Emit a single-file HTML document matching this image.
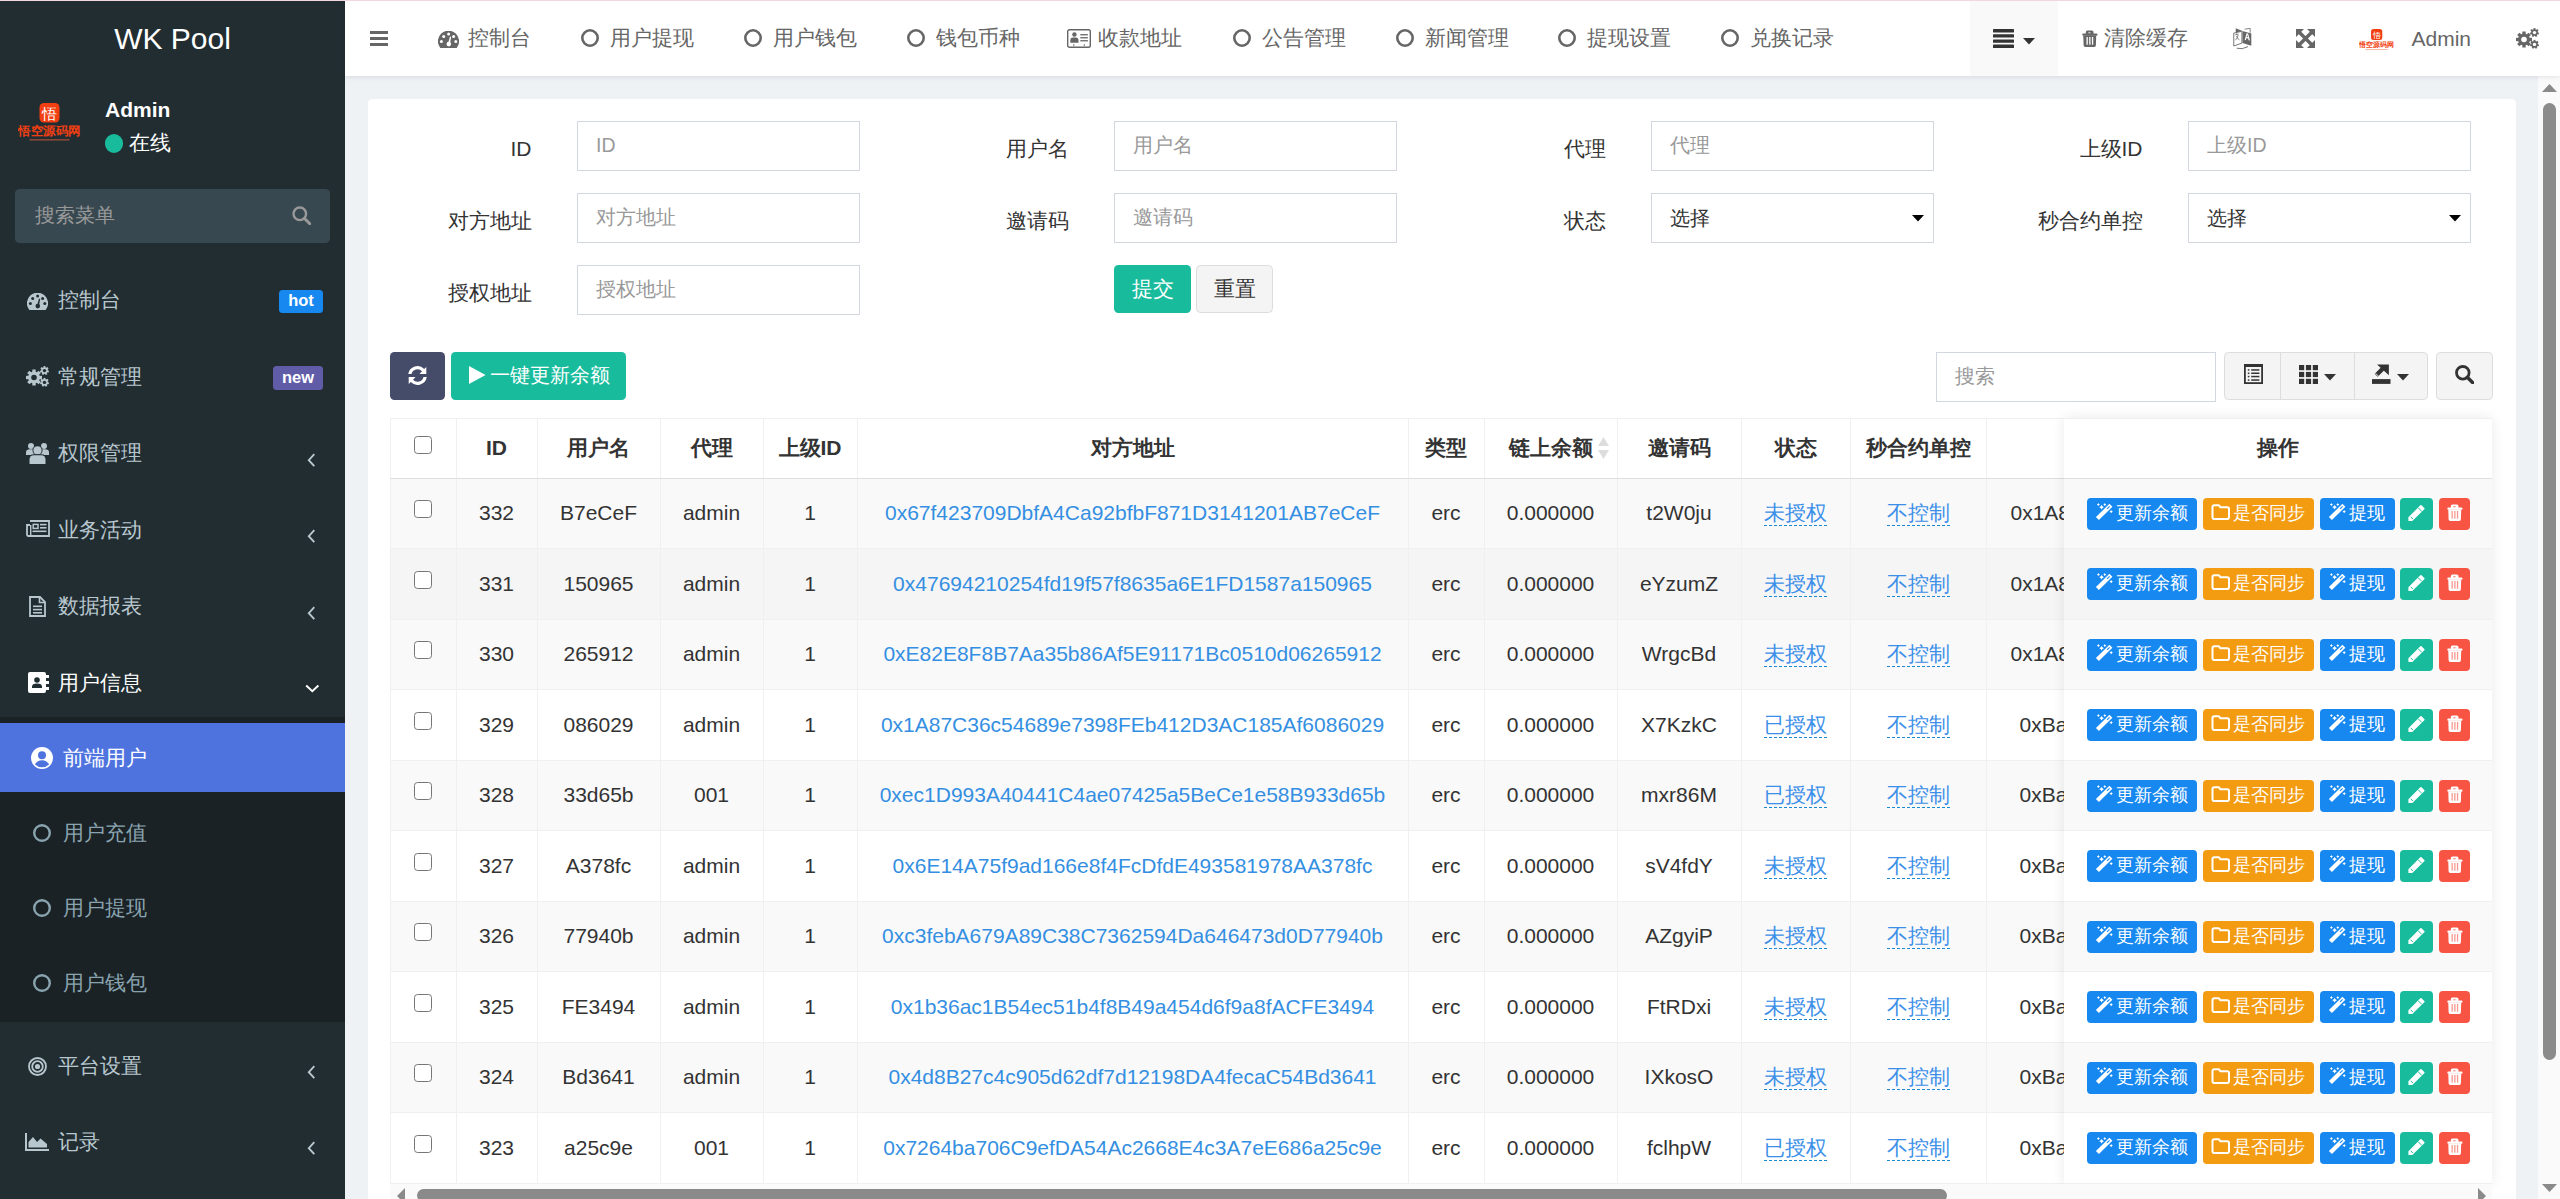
<!DOCTYPE html><html><head><meta charset="utf-8"><style>
html,body{margin:0;padding:0;width:2560px;height:1199px;overflow:hidden;background:#eef2f5;font-family:"Liberation Sans",sans-serif;}
*{box-sizing:border-box;}
</style></head><body>
<div style="position:absolute;left:0px;top:0px;width:345px;height:1199px;background:#222d32;"></div>
<div style="position:absolute;left:-327.5px;top:18.5px;height:40px;line-height:40px;font-size:30px;color:#fff;font-weight:normal;white-space:nowrap;text-align:center;width:1000px;">WK Pool</div>
<svg style="position:absolute;left:17.5px;top:103px;" width="64.0" height="46.0" viewBox="0 0 64.0 46.0"><rect x="21.5" y="0" width="20.0" height="19.5" rx="4.5" fill="#f23f12"/><text x="31.5" y="15.5" font-size="14.5" fill="#fff" text-anchor="middle">悟</text><text x="31.5" y="32.3" font-size="12.0" fill="#f23f12" text-anchor="middle" font-weight="bold" textLength="62.5" lengthAdjust="spacingAndGlyphs">悟空源码网</text><rect x="11.5" y="36.0" width="40.0" height="1.6" fill="#e8603c" opacity="0.5"/></svg>
<div style="position:absolute;left:105px;top:94.5px;height:30px;line-height:30px;font-size:21px;color:#fff;font-weight:bold;white-space:nowrap;text-align:left;">Admin</div>
<div style="position:absolute;left:104.8px;top:134.4px;width:18.3px;height:18.3px;border-radius:50%;background:#18bc9c"></div>
<div style="position:absolute;left:128.8px;top:128.3px;height:30px;line-height:30px;font-size:21px;color:#fff;font-weight:normal;white-space:nowrap;text-align:left;">在线</div>
<div style="position:absolute;left:15px;top:189px;width:315px;height:53.5px;background:#374850;border-radius:4.5px;"></div>
<div style="position:absolute;left:34.8px;top:200.2px;height:30px;line-height:30px;font-size:19.5px;color:#999;font-weight:normal;white-space:nowrap;text-align:left;">搜索菜单</div>
<svg style="position:absolute;left:292px;top:206px;" width="19" height="19" viewBox="0 0 19 19"><circle cx="7.8" cy="7.8" r="6.3" fill="none" stroke="#999" stroke-width="2.4"/><path d="M12.3,12.3 L17.8,17.8" stroke="#999" stroke-width="3.0" stroke-linecap="round"/></svg>
<div style="position:absolute;left:58.2px;top:285.1px;height:30px;line-height:30px;font-size:21px;color:#b8c7ce;font-weight:normal;white-space:nowrap;text-align:left;">控制台</div>
<svg style="position:absolute;left:26.7px;top:292.70000000000005px;" width="21" height="17" viewBox="0 0 21 17"><path d="M2.3,17 A10.6,10.6 0 1 1 18.7,17 Z" fill="#b8c7ce"/><circle cx="3.4" cy="10.6" r="1.5" fill="#222d32"/><circle cx="5.7" cy="5.4" r="1.5" fill="#222d32"/><circle cx="10.6" cy="3.1" r="1.5" fill="#222d32"/><circle cx="15.6" cy="5.4" r="1.5" fill="#222d32"/><circle cx="17.8" cy="10.6" r="1.5" fill="#222d32"/><circle cx="10.8" cy="13.1" r="2.3" fill="#222d32"/><path d="M9.9,12.9 L12,5.6 L13.2,5.9 L11.8,13.3 Z" fill="#222d32"/></svg>
<div style="position:absolute;left:279px;top:289.6px;width:44px;height:23px;border-radius:3.5px;background:#1688f0;color:#fff;font-weight:bold;font-size:16.5px;line-height:21.5px;text-align:center">hot</div>
<div style="position:absolute;left:58.2px;top:361.6px;height:30px;line-height:30px;font-size:21px;color:#b8c7ce;font-weight:normal;white-space:nowrap;text-align:left;">常规管理</div>
<svg style="position:absolute;left:26.3px;top:366.1px;" width="23" height="21" viewBox="0 0 23 21"><circle cx="8" cy="11.5" r="5.92" fill="#b8c7ce"/><rect x="6.32" y="3.50" width="3.36" height="4.00" fill="#b8c7ce" transform="rotate(0.0 8 11.5)"/><rect x="6.32" y="3.50" width="3.36" height="4.00" fill="#b8c7ce" transform="rotate(45.0 8 11.5)"/><rect x="6.32" y="3.50" width="3.36" height="4.00" fill="#b8c7ce" transform="rotate(90.0 8 11.5)"/><rect x="6.32" y="3.50" width="3.36" height="4.00" fill="#b8c7ce" transform="rotate(135.0 8 11.5)"/><rect x="6.32" y="3.50" width="3.36" height="4.00" fill="#b8c7ce" transform="rotate(180.0 8 11.5)"/><rect x="6.32" y="3.50" width="3.36" height="4.00" fill="#b8c7ce" transform="rotate(225.0 8 11.5)"/><rect x="6.32" y="3.50" width="3.36" height="4.00" fill="#b8c7ce" transform="rotate(270.0 8 11.5)"/><rect x="6.32" y="3.50" width="3.36" height="4.00" fill="#b8c7ce" transform="rotate(315.0 8 11.5)"/><circle cx="8" cy="11.5" r="2.8" fill="#222d32"/><circle cx="18.5" cy="4.6" r="3.33" fill="#b8c7ce"/><rect x="17.55" y="0.10" width="1.89" height="2.25" fill="#b8c7ce" transform="rotate(0.0 18.5 4.6)"/><rect x="17.55" y="0.10" width="1.89" height="2.25" fill="#b8c7ce" transform="rotate(51.4 18.5 4.6)"/><rect x="17.55" y="0.10" width="1.89" height="2.25" fill="#b8c7ce" transform="rotate(102.9 18.5 4.6)"/><rect x="17.55" y="0.10" width="1.89" height="2.25" fill="#b8c7ce" transform="rotate(154.3 18.5 4.6)"/><rect x="17.55" y="0.10" width="1.89" height="2.25" fill="#b8c7ce" transform="rotate(205.7 18.5 4.6)"/><rect x="17.55" y="0.10" width="1.89" height="2.25" fill="#b8c7ce" transform="rotate(257.1 18.5 4.6)"/><rect x="17.55" y="0.10" width="1.89" height="2.25" fill="#b8c7ce" transform="rotate(308.6 18.5 4.6)"/><circle cx="18.5" cy="4.6" r="1.7" fill="#222d32"/><circle cx="18.5" cy="16.4" r="3.33" fill="#b8c7ce"/><rect x="17.55" y="11.90" width="1.89" height="2.25" fill="#b8c7ce" transform="rotate(0.0 18.5 16.4)"/><rect x="17.55" y="11.90" width="1.89" height="2.25" fill="#b8c7ce" transform="rotate(51.4 18.5 16.4)"/><rect x="17.55" y="11.90" width="1.89" height="2.25" fill="#b8c7ce" transform="rotate(102.9 18.5 16.4)"/><rect x="17.55" y="11.90" width="1.89" height="2.25" fill="#b8c7ce" transform="rotate(154.3 18.5 16.4)"/><rect x="17.55" y="11.90" width="1.89" height="2.25" fill="#b8c7ce" transform="rotate(205.7 18.5 16.4)"/><rect x="17.55" y="11.90" width="1.89" height="2.25" fill="#b8c7ce" transform="rotate(257.1 18.5 16.4)"/><rect x="17.55" y="11.90" width="1.89" height="2.25" fill="#b8c7ce" transform="rotate(308.6 18.5 16.4)"/><circle cx="18.5" cy="16.4" r="1.7" fill="#222d32"/></svg>
<div style="position:absolute;left:273px;top:365.6px;width:50px;height:24.5px;border-radius:3.5px;background:#605ca8;color:#fff;font-weight:bold;font-size:16.5px;line-height:23.5px;text-align:center">new</div>
<div style="position:absolute;left:58.2px;top:438.1px;height:30px;line-height:30px;font-size:21px;color:#b8c7ce;font-weight:normal;white-space:nowrap;text-align:left;">权限管理</div>
<svg style="position:absolute;left:26px;top:443.1px;" width="23" height="21" viewBox="0 0 23 21"><circle cx="5" cy="3.1" r="3" fill="#b8c7ce"/><circle cx="18" cy="3.1" r="3" fill="#b8c7ce"/><path d="M0,12 L0,9.5 Q0,6.3 4,6.3 L7,6.3 Q9.5,6.3 9.5,9.5 L9.5,12 Z" fill="#b8c7ce"/><path d="M13.5,12 L13.5,9.5 Q13.5,6.3 16,6.3 L19,6.3 Q23,6.3 23,9.5 L23,12 Z" fill="#b8c7ce"/><circle cx="11.5" cy="7.4" r="5" fill="#222d32"/><circle cx="11.5" cy="7.4" r="4.1" fill="#b8c7ce"/><path d="M2.5,21 L2.5,16.5 Q2.5,11.2 8,11.2 L15,11.2 Q20.5,11.2 20.5,16.5 L20.5,21 Z" fill="#222d32"/><path d="M3.5,20.8 L3.5,16.5 Q3.5,12.2 8,12.2 L15,12.2 Q19.5,12.2 19.5,16.5 L19.5,20.8 Q19.5,21 19,21 L4,21 Q3.5,21 3.5,20.8 Z" fill="#b8c7ce"/></svg>
<svg style="position:absolute;left:306.8px;top:452.6px;" width="9" height="15" viewBox="0 0 9 15"><path d="M7.3,1.2 L1.8,7.2 L7.3,13.2" fill="none" stroke="#b8c7ce" stroke-width="1.9"/></svg>
<div style="position:absolute;left:58.2px;top:514.6px;height:30px;line-height:30px;font-size:21px;color:#b8c7ce;font-weight:normal;white-space:nowrap;text-align:left;">业务活动</div>
<svg style="position:absolute;left:25.5px;top:520.3000000000001px;" width="24" height="17" viewBox="0 0 24 17"><path d="M4,1 L23,1 L23,16 L2.5,16 Q1,16 1,14.5 L1,5 L4,5" fill="none" stroke="#b8c7ce" stroke-width="1.8"/><rect x="7.2" y="4.4" width="4.8" height="4" fill="none" stroke="#b8c7ce" stroke-width="1.5"/><rect x="14" y="3.8" width="6.5" height="1.6" fill="#b8c7ce"/><rect x="14" y="7" width="6.5" height="1.6" fill="#b8c7ce"/><rect x="6.5" y="10.5" width="14" height="1.6" fill="#b8c7ce"/><rect x="6.5" y="13" width="14" height="0" fill="#b8c7ce"/><rect x="4" y="5" width="1.4" height="10" fill="#b8c7ce"/></svg>
<svg style="position:absolute;left:306.8px;top:529.1px;" width="9" height="15" viewBox="0 0 9 15"><path d="M7.3,1.2 L1.8,7.2 L7.3,13.2" fill="none" stroke="#b8c7ce" stroke-width="1.9"/></svg>
<div style="position:absolute;left:58.2px;top:591.1px;height:30px;line-height:30px;font-size:21px;color:#b8c7ce;font-weight:normal;white-space:nowrap;text-align:left;">数据报表</div>
<svg style="position:absolute;left:29px;top:595.6px;" width="17" height="21" viewBox="0 0 17 21"><path d="M1,1 L11,1 L16,6 L16,20 L1,20 Z" fill="none" stroke="#b8c7ce" stroke-width="1.8"/><path d="M10.5,1 L10.5,6.5 L16,6.5" fill="none" stroke="#b8c7ce" stroke-width="1.6"/><rect x="4" y="9.5" width="9" height="1.6" fill="#b8c7ce"/><rect x="4" y="12.8" width="9" height="1.6" fill="#b8c7ce"/><rect x="4" y="16" width="9" height="1.6" fill="#b8c7ce"/></svg>
<svg style="position:absolute;left:306.8px;top:605.6px;" width="9" height="15" viewBox="0 0 9 15"><path d="M7.3,1.2 L1.8,7.2 L7.3,13.2" fill="none" stroke="#b8c7ce" stroke-width="1.9"/></svg>
<div style="position:absolute;left:58.2px;top:667.6px;height:30px;line-height:30px;font-size:21px;color:#fff;font-weight:normal;white-space:nowrap;text-align:left;">用户信息</div>
<svg style="position:absolute;left:27.5px;top:672.1px;" width="21" height="21" viewBox="0 0 21 21"><rect x="0" y="0" width="18" height="21" rx="2" fill="#fff"/><rect x="18" y="3" width="3" height="3" fill="#fff"/><rect x="18" y="9" width="3" height="3" fill="#fff"/><rect x="18" y="15" width="3" height="3" fill="#fff"/><circle cx="9" cy="8" r="2.8" fill="#222d32"/><path d="M4,16 L4,14.5 Q4,11.5 9,11.5 Q14,11.5 14,14.5 L14,16 Z" fill="#222d32"/></svg>
<svg style="position:absolute;left:305px;top:683.8000000000001px;" width="15" height="9" viewBox="0 0 15 9"><path d="M1.2,1.5 L7.3,7.3 L13.4,1.5" fill="none" stroke="#fff" stroke-width="1.9"/></svg>
<div style="position:absolute;left:0px;top:716.6px;width:345px;height:305.9px;background:#1a2226;"></div>
<div style="position:absolute;left:0px;top:723px;width:345px;height:69px;background:#4e73df;"></div>
<svg style="position:absolute;left:31.2px;top:746.8px;" width="22" height="22" viewBox="0 0 22 22"><circle cx="11" cy="11" r="11" fill="#fff"/><circle cx="11" cy="8.3" r="4" fill="#4e73df"/><path d="M4,17.5 Q6,13.2 11,13.2 Q16,13.2 18,17.5 Q15,20.3 11,20.3 Q7,20.3 4,17.5 Z" fill="#4e73df"/></svg>
<div style="position:absolute;left:63px;top:742.5px;height:30px;line-height:30px;font-size:21px;color:#fff;font-weight:normal;white-space:nowrap;text-align:left;">前端用户</div>
<svg style="position:absolute;left:33px;top:824px;" width="18" height="18" viewBox="0 0 18 18"><circle cx="9" cy="9" r="7.8" fill="none" stroke="#8aa4af" stroke-width="2.4"/></svg>
<div style="position:absolute;left:63px;top:818.0px;height:30px;line-height:30px;font-size:21px;color:#8aa4af;font-weight:normal;white-space:nowrap;text-align:left;">用户充值</div>
<svg style="position:absolute;left:33px;top:899px;" width="18" height="18" viewBox="0 0 18 18"><circle cx="9" cy="9" r="7.8" fill="none" stroke="#8aa4af" stroke-width="2.4"/></svg>
<div style="position:absolute;left:63px;top:893.0px;height:30px;line-height:30px;font-size:21px;color:#8aa4af;font-weight:normal;white-space:nowrap;text-align:left;">用户提现</div>
<svg style="position:absolute;left:33px;top:974px;" width="18" height="18" viewBox="0 0 18 18"><circle cx="9" cy="9" r="7.8" fill="none" stroke="#8aa4af" stroke-width="2.4"/></svg>
<div style="position:absolute;left:63px;top:968.0px;height:30px;line-height:30px;font-size:21px;color:#8aa4af;font-weight:normal;white-space:nowrap;text-align:left;">用户钱包</div>
<div style="position:absolute;left:58.3px;top:1050.8px;height:30px;line-height:30px;font-size:21px;color:#b8c7ce;font-weight:normal;white-space:nowrap;text-align:left;">平台设置</div>
<svg style="position:absolute;left:28.3px;top:1056.5px;" width="19" height="19" viewBox="0 0 19 19"><circle cx="9.5" cy="9.5" r="8.5" fill="none" stroke="#b8c7ce" stroke-width="1.8"/><circle cx="9.5" cy="9.5" r="5.3" fill="none" stroke="#b8c7ce" stroke-width="1.8"/><circle cx="9.5" cy="9.5" r="2.6" fill="#b8c7ce"/></svg>
<svg style="position:absolute;left:306.8px;top:1065.3px;" width="9" height="15" viewBox="0 0 9 15"><path d="M7.3,1.2 L1.8,7.2 L7.3,13.2" fill="none" stroke="#b8c7ce" stroke-width="1.9"/></svg>
<div style="position:absolute;left:58.3px;top:1126.7px;height:30px;line-height:30px;font-size:21px;color:#b8c7ce;font-weight:normal;white-space:nowrap;text-align:left;">记录</div>
<svg style="position:absolute;left:25px;top:1132.7px;" width="24" height="18" viewBox="0 0 24 18"><path d="M0,0 L2,0 L2,16 L24,16 L24,18 L0,18 Z" fill="#b8c7ce"/><path d="M3.5,14.5 L3.5,9 L8,4 L12,9 L15.5,5.5 L22,11 L22,14.5 Z" fill="#b8c7ce"/></svg>
<svg style="position:absolute;left:306.8px;top:1141.2px;" width="9" height="15" viewBox="0 0 9 15"><path d="M7.3,1.2 L1.8,7.2 L7.3,13.2" fill="none" stroke="#b8c7ce" stroke-width="1.9"/></svg>
<div style="position:absolute;left:345px;top:0px;width:2215px;height:76px;background:#fff;box-shadow:0 1px 5px rgba(0,20,50,0.10);z-index:2;"></div>
<div style="position:absolute;left:0;top:0;width:2560px;height:76px;z-index:3;pointer-events:none">
<svg style="position:absolute;left:370px;top:31px;" width="18" height="15" viewBox="0 0 18 15"><rect x="0" y="0" width="18" height="3" fill="#666"/><rect x="0" y="6" width="18" height="3" fill="#666"/><rect x="0" y="12" width="18" height="3" fill="#666"/></svg>
<svg style="position:absolute;left:438px;top:31px;" width="21" height="17" viewBox="0 0 21 17"><path d="M2.3,17 A10.6,10.6 0 1 1 18.7,17 Z" fill="#666"/><circle cx="3.4" cy="10.6" r="1.5" fill="#fff"/><circle cx="5.7" cy="5.4" r="1.5" fill="#fff"/><circle cx="10.6" cy="3.1" r="1.5" fill="#fff"/><circle cx="15.6" cy="5.4" r="1.5" fill="#fff"/><circle cx="17.8" cy="10.6" r="1.5" fill="#fff"/><circle cx="10.8" cy="13.1" r="2.3" fill="#fff"/><path d="M9.9,12.9 L12,5.6 L13.2,5.9 L11.8,13.3 Z" fill="#fff"/></svg>
<div style="position:absolute;left:467.5px;top:23.0px;height:30px;line-height:30px;font-size:21px;color:#666;font-weight:normal;white-space:nowrap;text-align:left;">控制台</div>
<svg style="position:absolute;left:581px;top:29.3px;" width="18" height="18" viewBox="0 0 18 18"><circle cx="9" cy="9" r="7.7" fill="none" stroke="#666" stroke-width="2.6"/></svg>
<div style="position:absolute;left:610px;top:23.0px;height:30px;line-height:30px;font-size:21px;color:#666;font-weight:normal;white-space:nowrap;text-align:left;">用户提现</div>
<svg style="position:absolute;left:744px;top:29.3px;" width="18" height="18" viewBox="0 0 18 18"><circle cx="9" cy="9" r="7.7" fill="none" stroke="#666" stroke-width="2.6"/></svg>
<div style="position:absolute;left:773px;top:23.0px;height:30px;line-height:30px;font-size:21px;color:#666;font-weight:normal;white-space:nowrap;text-align:left;">用户钱包</div>
<svg style="position:absolute;left:907px;top:29.3px;" width="18" height="18" viewBox="0 0 18 18"><circle cx="9" cy="9" r="7.7" fill="none" stroke="#666" stroke-width="2.6"/></svg>
<div style="position:absolute;left:936px;top:23.0px;height:30px;line-height:30px;font-size:21px;color:#666;font-weight:normal;white-space:nowrap;text-align:left;">钱包币种</div>
<svg style="position:absolute;left:1067px;top:29px;" width="24" height="19" viewBox="0 0 24 19"><rect x="0.7" y="0.7" width="22.6" height="17.5" rx="1.8" fill="none" stroke="#666" stroke-width="1.4"/><circle cx="7.4" cy="5.5" r="2.2" fill="#666"/><path d="M3.3,13.8 L3.3,11.5 Q3.3,8.6 6,8.6 L8.8,8.6 Q11.5,8.6 11.5,11.5 L11.5,13.8 Z" fill="#666"/><rect x="13.3" y="5.1" width="7.6" height="1.3" fill="#666"/><rect x="13.3" y="8.1" width="7.6" height="1.3" fill="#666"/><rect x="13.3" y="11.1" width="7.6" height="1.3" fill="#666"/><rect x="6.4" y="15.1" width="0.9" height="2" fill="#666"/><rect x="16.8" y="15.1" width="0.9" height="2" fill="#666"/></svg>
<div style="position:absolute;left:1098px;top:23.0px;height:30px;line-height:30px;font-size:21px;color:#666;font-weight:normal;white-space:nowrap;text-align:left;">收款地址</div>
<svg style="position:absolute;left:1233px;top:29.3px;" width="18" height="18" viewBox="0 0 18 18"><circle cx="9" cy="9" r="7.7" fill="none" stroke="#666" stroke-width="2.6"/></svg>
<div style="position:absolute;left:1262px;top:23.0px;height:30px;line-height:30px;font-size:21px;color:#666;font-weight:normal;white-space:nowrap;text-align:left;">公告管理</div>
<svg style="position:absolute;left:1396px;top:29.3px;" width="18" height="18" viewBox="0 0 18 18"><circle cx="9" cy="9" r="7.7" fill="none" stroke="#666" stroke-width="2.6"/></svg>
<div style="position:absolute;left:1425px;top:23.0px;height:30px;line-height:30px;font-size:21px;color:#666;font-weight:normal;white-space:nowrap;text-align:left;">新闻管理</div>
<svg style="position:absolute;left:1558px;top:29.3px;" width="18" height="18" viewBox="0 0 18 18"><circle cx="9" cy="9" r="7.7" fill="none" stroke="#666" stroke-width="2.6"/></svg>
<div style="position:absolute;left:1587px;top:23.0px;height:30px;line-height:30px;font-size:21px;color:#666;font-weight:normal;white-space:nowrap;text-align:left;">提现设置</div>
<svg style="position:absolute;left:1721px;top:29.3px;" width="18" height="18" viewBox="0 0 18 18"><circle cx="9" cy="9" r="7.7" fill="none" stroke="#666" stroke-width="2.6"/></svg>
<div style="position:absolute;left:1750px;top:23.0px;height:30px;line-height:30px;font-size:21px;color:#666;font-weight:normal;white-space:nowrap;text-align:left;">兑换记录</div>
<div style="position:absolute;left:1970px;top:1px;width:88px;height:75px;background:#f9f9f9;"></div>
<svg style="position:absolute;left:1993px;top:29px;" width="21" height="19" viewBox="0 0 21 19"><rect x="0" y="0" width="21" height="3.4" rx="0.6" fill="#333"/><rect x="0" y="5.2" width="21" height="3.4" rx="0.6" fill="#333"/><rect x="0" y="10.4" width="21" height="3.4" rx="0.6" fill="#333"/><rect x="0" y="15.6" width="21" height="3.4" rx="0.6" fill="#333"/></svg>
<svg style="position:absolute;left:2023px;top:38px;" width="12" height="7" viewBox="0 0 12 7"><path d="M0,0 L12,0 L6,6.6 Z" fill="#333"/></svg>
<svg style="position:absolute;left:2082px;top:29.5px;" width="16" height="17" viewBox="0 0 16 17"><rect x="3.8" y="0.5" width="7.7" height="4" rx="1.6" fill="#666"/><rect x="6.3" y="2.4" width="2.2" height="1.1" fill="#fff"/><rect x="0.3" y="3.5" width="15.2" height="2.3" rx="1" fill="#666"/><path d="M1.3,5.5 L14.2,5.5 L13.9,15.3 Q13.9,17 12.2,17 L3.3,17 Q1.6,17 1.6,15.3 Z" fill="#666"/><rect x="4.5" y="7" width="1.3" height="7.7" fill="#fff" opacity="1.0"/><rect x="7.2" y="7" width="1.3" height="7.7" fill="#fff" opacity="1.0"/><rect x="9.9" y="7" width="1.3" height="7.7" fill="#fff" opacity="1.0"/></svg>
<div style="position:absolute;left:2104px;top:23.0px;height:30px;line-height:30px;font-size:21px;color:#666;font-weight:normal;white-space:nowrap;text-align:left;">清除缓存</div>
<svg style="position:absolute;left:2232.5px;top:28px;" width="19" height="22" viewBox="0 0 19 22"><path d="M2.75,0.3 L2.75,4.6 L9.5,3.1 Z" fill="#666"/><path d="M11.6,1.2 L17.2,0.4 L17.2,4.8" fill="none" stroke="#666" stroke-width="0.8"/><path d="M9.5,3.1 L18.3,5.6 L18.3,17.8 L9.5,15.1 Z" fill="#666"/><path d="M0.75,5.1 L8.9,3.3 L8.9,15.1 L0.75,18 Z" fill="none" stroke="#666" stroke-width="0.9"/><path d="M11.6,12.3 L13.6,5.2 L15.1,5.6 L17,12.6 L15.6,12.3 L15.1,10.5 L13.3,10.2 L12.9,11.9 Z M13.6,9 L14.9,9.2 L14.3,6.8 Z" fill="#fff" fill-rule="evenodd"/><path d="M2.3,6.8 L5.5,6.2 M3.6,5.4 L3.9,6.5 M2.4,12.2 Q4.8,10 5.2,7 M3.4,8.2 Q4.6,11 6.4,11.8" fill="none" stroke="#666" stroke-width="0.8"/><path d="M3.7,20.2 Q9,22 15,18.6" fill="none" stroke="#666" stroke-width="0.9"/></svg>
<svg style="position:absolute;left:2296px;top:29px;" width="19" height="19" viewBox="0 0 19 19"><path d="M2.5,2.5 L16.5,16.5 M16.5,2.5 L2.5,16.5" stroke="#666" stroke-width="3.4"/><path d="M0,0 L8,0 L0,8 Z M19,0 L19,8 L11,0 Z M0,19 L0,11 L8,19 Z M19,19 L11,19 L19,11 Z" fill="#666"/></svg>
<svg style="position:absolute;left:2359px;top:28.5px;" width="35.84" height="25.76" viewBox="0 0 35.84 25.76"><rect x="12.040000000000001" y="0" width="11.200000000000001" height="10.920000000000002" rx="2.5200000000000005" fill="#f23f12"/><text x="17.64" y="8.680000000000001" font-size="8.120000000000001" fill="#fff" text-anchor="middle">悟</text><text x="17.64" y="18.088" font-size="6.720000000000001" fill="#f23f12" text-anchor="middle" font-weight="bold" textLength="35.0" lengthAdjust="spacingAndGlyphs">悟空源码网</text><rect x="6.44" y="20.160000000000004" width="22.400000000000002" height="0.8960000000000001" fill="#e8603c" opacity="0.5"/></svg>
<div style="position:absolute;left:2411.5px;top:23.5px;height:30px;line-height:30px;font-size:21px;color:#666;font-weight:normal;white-space:nowrap;text-align:left;">Admin</div>
<svg style="position:absolute;left:2516px;top:28px;" width="23" height="21" viewBox="0 0 23 21"><circle cx="8" cy="11.5" r="5.92" fill="#666"/><rect x="6.32" y="3.50" width="3.36" height="4.00" fill="#666" transform="rotate(0.0 8 11.5)"/><rect x="6.32" y="3.50" width="3.36" height="4.00" fill="#666" transform="rotate(45.0 8 11.5)"/><rect x="6.32" y="3.50" width="3.36" height="4.00" fill="#666" transform="rotate(90.0 8 11.5)"/><rect x="6.32" y="3.50" width="3.36" height="4.00" fill="#666" transform="rotate(135.0 8 11.5)"/><rect x="6.32" y="3.50" width="3.36" height="4.00" fill="#666" transform="rotate(180.0 8 11.5)"/><rect x="6.32" y="3.50" width="3.36" height="4.00" fill="#666" transform="rotate(225.0 8 11.5)"/><rect x="6.32" y="3.50" width="3.36" height="4.00" fill="#666" transform="rotate(270.0 8 11.5)"/><rect x="6.32" y="3.50" width="3.36" height="4.00" fill="#666" transform="rotate(315.0 8 11.5)"/><circle cx="8" cy="11.5" r="2.8" fill="#fff"/><circle cx="18.5" cy="4.6" r="3.33" fill="#666"/><rect x="17.55" y="0.10" width="1.89" height="2.25" fill="#666" transform="rotate(0.0 18.5 4.6)"/><rect x="17.55" y="0.10" width="1.89" height="2.25" fill="#666" transform="rotate(51.4 18.5 4.6)"/><rect x="17.55" y="0.10" width="1.89" height="2.25" fill="#666" transform="rotate(102.9 18.5 4.6)"/><rect x="17.55" y="0.10" width="1.89" height="2.25" fill="#666" transform="rotate(154.3 18.5 4.6)"/><rect x="17.55" y="0.10" width="1.89" height="2.25" fill="#666" transform="rotate(205.7 18.5 4.6)"/><rect x="17.55" y="0.10" width="1.89" height="2.25" fill="#666" transform="rotate(257.1 18.5 4.6)"/><rect x="17.55" y="0.10" width="1.89" height="2.25" fill="#666" transform="rotate(308.6 18.5 4.6)"/><circle cx="18.5" cy="4.6" r="1.7" fill="#fff"/><circle cx="18.5" cy="16.4" r="3.33" fill="#666"/><rect x="17.55" y="11.90" width="1.89" height="2.25" fill="#666" transform="rotate(0.0 18.5 16.4)"/><rect x="17.55" y="11.90" width="1.89" height="2.25" fill="#666" transform="rotate(51.4 18.5 16.4)"/><rect x="17.55" y="11.90" width="1.89" height="2.25" fill="#666" transform="rotate(102.9 18.5 16.4)"/><rect x="17.55" y="11.90" width="1.89" height="2.25" fill="#666" transform="rotate(154.3 18.5 16.4)"/><rect x="17.55" y="11.90" width="1.89" height="2.25" fill="#666" transform="rotate(205.7 18.5 16.4)"/><rect x="17.55" y="11.90" width="1.89" height="2.25" fill="#666" transform="rotate(257.1 18.5 16.4)"/><rect x="17.55" y="11.90" width="1.89" height="2.25" fill="#666" transform="rotate(308.6 18.5 16.4)"/><circle cx="18.5" cy="16.4" r="1.7" fill="#fff"/></svg>
</div>
<div style="position:absolute;left:0px;top:0px;width:2560px;height:1px;background:#f0d8de;z-index:5;"></div>
<div style="position:absolute;left:368px;top:99px;width:2148px;height:1150px;background:#fff;border-radius:4.5px;"></div>
<div style="position:absolute;left:-468.5px;top:133.5px;height:30px;line-height:30px;font-size:21px;color:#333;font-weight:normal;white-space:nowrap;text-align:right;width:1000px;">ID</div>
<div style="position:absolute;left:577px;top:121px;width:283px;height:49.5px;border:1px solid #d2d6de;background:#fff"></div>
<div style="position:absolute;left:596px;top:130.0px;height:30px;line-height:30px;font-size:19.5px;color:#999;font-weight:normal;white-space:nowrap;text-align:left;">ID</div>
<div style="position:absolute;left:68.5px;top:133.5px;height:30px;line-height:30px;font-size:21px;color:#333;font-weight:normal;white-space:nowrap;text-align:right;width:1000px;">用户名</div>
<div style="position:absolute;left:1114px;top:121px;width:283px;height:49.5px;border:1px solid #d2d6de;background:#fff"></div>
<div style="position:absolute;left:1133px;top:130.0px;height:30px;line-height:30px;font-size:19.5px;color:#999;font-weight:normal;white-space:nowrap;text-align:left;">用户名</div>
<div style="position:absolute;left:605.5px;top:133.5px;height:30px;line-height:30px;font-size:21px;color:#333;font-weight:normal;white-space:nowrap;text-align:right;width:1000px;">代理</div>
<div style="position:absolute;left:1651px;top:121px;width:283px;height:49.5px;border:1px solid #d2d6de;background:#fff"></div>
<div style="position:absolute;left:1670px;top:130.0px;height:30px;line-height:30px;font-size:19.5px;color:#999;font-weight:normal;white-space:nowrap;text-align:left;">代理</div>
<div style="position:absolute;left:1142.5px;top:133.5px;height:30px;line-height:30px;font-size:21px;color:#333;font-weight:normal;white-space:nowrap;text-align:right;width:1000px;">上级ID</div>
<div style="position:absolute;left:2188px;top:121px;width:283px;height:49.5px;border:1px solid #d2d6de;background:#fff"></div>
<div style="position:absolute;left:2207px;top:130.0px;height:30px;line-height:30px;font-size:19.5px;color:#999;font-weight:normal;white-space:nowrap;text-align:left;">上级ID</div>
<div style="position:absolute;left:-468.5px;top:205.5px;height:30px;line-height:30px;font-size:21px;color:#333;font-weight:normal;white-space:nowrap;text-align:right;width:1000px;">对方地址</div>
<div style="position:absolute;left:577px;top:193px;width:283px;height:49.5px;border:1px solid #d2d6de;background:#fff"></div>
<div style="position:absolute;left:596px;top:202.0px;height:30px;line-height:30px;font-size:19.5px;color:#999;font-weight:normal;white-space:nowrap;text-align:left;">对方地址</div>
<div style="position:absolute;left:68.5px;top:205.5px;height:30px;line-height:30px;font-size:21px;color:#333;font-weight:normal;white-space:nowrap;text-align:right;width:1000px;">邀请码</div>
<div style="position:absolute;left:1114px;top:193px;width:283px;height:49.5px;border:1px solid #d2d6de;background:#fff"></div>
<div style="position:absolute;left:1133px;top:202.0px;height:30px;line-height:30px;font-size:19.5px;color:#999;font-weight:normal;white-space:nowrap;text-align:left;">邀请码</div>
<div style="position:absolute;left:605.5px;top:205.5px;height:30px;line-height:30px;font-size:21px;color:#333;font-weight:normal;white-space:nowrap;text-align:right;width:1000px;">状态</div>
<div style="position:absolute;left:1651px;top:193px;width:283px;height:49.5px;border:1px solid #d2d6de;background:#fff"></div>
<div style="position:absolute;left:1670px;top:202.5px;height:30px;line-height:30px;font-size:19.5px;color:#333;font-weight:normal;white-space:nowrap;text-align:left;">选择</div>
<svg style="position:absolute;left:1912px;top:214.5px;" width="12" height="7" viewBox="0 0 12 7"><path d="M0,0 L12,0 L6,6.6 Z" fill="#000"/></svg>
<div style="position:absolute;left:1142.5px;top:205.5px;height:30px;line-height:30px;font-size:21px;color:#333;font-weight:normal;white-space:nowrap;text-align:right;width:1000px;">秒合约单控</div>
<div style="position:absolute;left:2188px;top:193px;width:283px;height:49.5px;border:1px solid #d2d6de;background:#fff"></div>
<div style="position:absolute;left:2207px;top:202.5px;height:30px;line-height:30px;font-size:19.5px;color:#333;font-weight:normal;white-space:nowrap;text-align:left;">选择</div>
<svg style="position:absolute;left:2449px;top:214.5px;" width="12" height="7" viewBox="0 0 12 7"><path d="M0,0 L12,0 L6,6.6 Z" fill="#000"/></svg>
<div style="position:absolute;left:-468.5px;top:277.5px;height:30px;line-height:30px;font-size:21px;color:#333;font-weight:normal;white-space:nowrap;text-align:right;width:1000px;">授权地址</div>
<div style="position:absolute;left:577px;top:265px;width:283px;height:49.5px;border:1px solid #d2d6de;background:#fff"></div>
<div style="position:absolute;left:596px;top:274.0px;height:30px;line-height:30px;font-size:19.5px;color:#999;font-weight:normal;white-space:nowrap;text-align:left;">授权地址</div>
<div style="position:absolute;left:1114px;top:265px;width:77px;height:48px;border-radius:4.5px;background:#18bc9c"></div>
<div style="position:absolute;left:652.5px;top:274.0px;height:30px;line-height:30px;font-size:21px;color:#fff;font-weight:normal;white-space:nowrap;text-align:center;width:1000px;">提交</div>
<div style="position:absolute;left:1196px;top:265px;width:77px;height:48px;border-radius:4.5px;background:#f4f4f4;border:1px solid #ddd"></div>
<div style="position:absolute;left:734.5px;top:274.0px;height:30px;line-height:30px;font-size:21px;color:#333;font-weight:normal;white-space:nowrap;text-align:center;width:1000px;">重置</div>
<div style="position:absolute;left:390px;top:352px;width:55px;height:48px;border-radius:4.5px;background:#444c69"></div>
<svg style="position:absolute;left:408px;top:365.5px;" width="19" height="19" viewBox="0 0 19 19"><path d="M0.22,8 A9.4,9.4 0 0 1 16.2,2.9 L18.3,1 L18.3,8 L11.5,8 L14,5.2 A6.2,6.2 0 0 0 3.48,8 Z" fill="#fff"/><path d="M18.78,11 A9.4,9.4 0 0 1 2.8,16.1 L0.7,18 L0.7,11 L7.5,11 L5,13.8 A6.2,6.2 0 0 0 15.52,11 Z" fill="#fff"/></svg>
<div style="position:absolute;left:451px;top:352px;width:175px;height:48px;border-radius:4.5px;background:#18bc9c"></div>
<svg style="position:absolute;left:469px;top:366px;" width="17" height="18" viewBox="0 0 17 18"><path d="M0,0 L16.6,9 L0,18 Z" fill="#fff"/></svg>
<div style="position:absolute;left:490px;top:360.0px;height:30px;line-height:30px;font-size:19.5px;color:#fff;font-weight:normal;white-space:nowrap;text-align:left;">一键更新余额</div>
<div style="position:absolute;left:1936px;top:352px;width:280px;height:49.5px;border:1px solid #d2d6de;background:#fff"></div>
<div style="position:absolute;left:1955px;top:360.5px;height:30px;line-height:30px;font-size:19.5px;color:#999;font-weight:normal;white-space:nowrap;text-align:left;">搜索</div>
<div style="position:absolute;left:2224px;top:352px;width:203.5px;height:47.5px;border-radius:4.5px;background:#f4f4f4;border:1px solid #ddd"></div>
<div style="position:absolute;left:2280px;top:352px;width:1px;height:47.5px;background:#ddd;"></div>
<div style="position:absolute;left:2353.5px;top:352px;width:1px;height:47.5px;background:#ddd;"></div>
<svg style="position:absolute;left:2244.2px;top:363.9px;" width="19" height="20" viewBox="0 0 19 20"><rect x="0.9" y="1.3" width="17.2" height="17.8" fill="none" stroke="#333" stroke-width="1.8"/><rect x="0" y="0" width="19" height="3" fill="#333"/><rect x="3.8" y="5.2" width="1.6" height="1.5" fill="#333"/><rect x="7.2" y="5.2" width="8.2" height="1.5" fill="#333"/><rect x="3.8" y="8.5" width="1.6" height="1.5" fill="#333"/><rect x="7.2" y="8.5" width="8.2" height="1.5" fill="#333"/><rect x="3.8" y="11.8" width="1.6" height="1.5" fill="#333"/><rect x="7.2" y="11.8" width="8.2" height="1.5" fill="#333"/><rect x="3.8" y="15.3" width="1.6" height="1.5" fill="#333"/><rect x="7.2" y="15.3" width="8.2" height="1.5" fill="#333"/></svg>
<svg style="position:absolute;left:2298.5px;top:364.5px;" width="19" height="19" viewBox="0 0 19 19"><rect x="0" y="0" width="5.2" height="5.2" fill="#333"/><rect x="0" y="6.9" width="5.2" height="5.2" fill="#333"/><rect x="0" y="13.8" width="5.2" height="5.2" fill="#333"/><rect x="6.9" y="0" width="5.2" height="5.2" fill="#333"/><rect x="6.9" y="6.9" width="5.2" height="5.2" fill="#333"/><rect x="6.9" y="13.8" width="5.2" height="5.2" fill="#333"/><rect x="13.8" y="0" width="5.2" height="5.2" fill="#333"/><rect x="13.8" y="6.9" width="5.2" height="5.2" fill="#333"/><rect x="13.8" y="13.8" width="5.2" height="5.2" fill="#333"/></svg>
<svg style="position:absolute;left:2324px;top:373.5px;" width="12" height="7" viewBox="0 0 12 7"><path d="M0,0 L12,0 L6,6.6 Z" fill="#333"/></svg>
<svg style="position:absolute;left:2372px;top:363.5px;" width="19" height="21" viewBox="0 0 19 21"><rect x="0" y="15.1" width="18.5" height="4.8" fill="#333"/><path d="M5,0.4 L16.9,0.4 L16.9,11.3 Z" fill="#333"/><path d="M4.2,11.2 L11.5,3.9" stroke="#333" stroke-width="4.3"/><path d="M3.6,9.3 L6.2,11.9" stroke="#f4f4f4" stroke-width="1"/></svg>
<svg style="position:absolute;left:2396.8px;top:373.5px;" width="12" height="7" viewBox="0 0 12 7"><path d="M0,0 L12,0 L6,6.6 Z" fill="#333"/></svg>
<div style="position:absolute;left:2436px;top:352px;width:57px;height:47.5px;border-radius:4.5px;background:#f4f4f4;border:1px solid #ddd"></div>
<svg style="position:absolute;left:2455px;top:364.5px;" width="19" height="19" viewBox="0 0 19 19"><circle cx="7.8" cy="7.8" r="6.3" fill="none" stroke="#333" stroke-width="2.8"/><path d="M12.3,12.3 L17.8,17.8" stroke="#333" stroke-width="3.4" stroke-linecap="round"/></svg>
<div style="position:absolute;left:390px;top:417.5px;width:2102px;height:766.0px;overflow:hidden;background:#fff">
<div style="position:absolute;left:0px;top:60.5px;width:2400px;height:70.5px;background:#f9f9f9;"></div>
<div style="position:absolute;left:0px;top:131.0px;width:2400px;height:70.5px;background:#f5f5f5;"></div>
<div style="position:absolute;left:0px;top:201.5px;width:2400px;height:70.5px;background:#f9f9f9;"></div>
<div style="position:absolute;left:0px;top:272.0px;width:2400px;height:70.5px;background:#fff;"></div>
<div style="position:absolute;left:0px;top:342.5px;width:2400px;height:70.5px;background:#f9f9f9;"></div>
<div style="position:absolute;left:0px;top:413.0px;width:2400px;height:70.5px;background:#fff;"></div>
<div style="position:absolute;left:0px;top:483.5px;width:2400px;height:70.5px;background:#f9f9f9;"></div>
<div style="position:absolute;left:0px;top:554.0px;width:2400px;height:70.5px;background:#fff;"></div>
<div style="position:absolute;left:0px;top:624.5px;width:2400px;height:70.5px;background:#f9f9f9;"></div>
<div style="position:absolute;left:0px;top:695.0px;width:2400px;height:70.5px;background:#fff;"></div>
<div style="position:absolute;left:0px;top:0px;width:1px;height:766.0px;background:#f0f0f0;"></div>
<div style="position:absolute;left:66px;top:0px;width:1px;height:766.0px;background:#f0f0f0;"></div>
<div style="position:absolute;left:147px;top:0px;width:1px;height:766.0px;background:#f0f0f0;"></div>
<div style="position:absolute;left:270px;top:0px;width:1px;height:766.0px;background:#f0f0f0;"></div>
<div style="position:absolute;left:373px;top:0px;width:1px;height:766.0px;background:#f0f0f0;"></div>
<div style="position:absolute;left:467px;top:0px;width:1px;height:766.0px;background:#f0f0f0;"></div>
<div style="position:absolute;left:1018px;top:0px;width:1px;height:766.0px;background:#f0f0f0;"></div>
<div style="position:absolute;left:1094px;top:0px;width:1px;height:766.0px;background:#f0f0f0;"></div>
<div style="position:absolute;left:1227px;top:0px;width:1px;height:766.0px;background:#f0f0f0;"></div>
<div style="position:absolute;left:1351px;top:0px;width:1px;height:766.0px;background:#f0f0f0;"></div>
<div style="position:absolute;left:1460px;top:0px;width:1px;height:766.0px;background:#f0f0f0;"></div>
<div style="position:absolute;left:1596px;top:0px;width:1px;height:766.0px;background:#f0f0f0;"></div>
<div style="position:absolute;left:0px;top:0px;width:2400px;height:1px;background:#f0f0f0;"></div>
<div style="position:absolute;left:0px;top:60.0px;width:2400px;height:1.5px;background:#ddd;"></div>
<div style="position:absolute;left:0px;top:130.5px;width:2400px;height:1px;background:#f0f0f0;"></div>
<div style="position:absolute;left:0px;top:201.0px;width:2400px;height:1px;background:#f0f0f0;"></div>
<div style="position:absolute;left:0px;top:271.5px;width:2400px;height:1px;background:#f0f0f0;"></div>
<div style="position:absolute;left:0px;top:342.0px;width:2400px;height:1px;background:#f0f0f0;"></div>
<div style="position:absolute;left:0px;top:412.5px;width:2400px;height:1px;background:#f0f0f0;"></div>
<div style="position:absolute;left:0px;top:483.0px;width:2400px;height:1px;background:#f0f0f0;"></div>
<div style="position:absolute;left:0px;top:553.5px;width:2400px;height:1px;background:#f0f0f0;"></div>
<div style="position:absolute;left:0px;top:624.0px;width:2400px;height:1px;background:#f0f0f0;"></div>
<div style="position:absolute;left:0px;top:694.5px;width:2400px;height:1px;background:#f0f0f0;"></div>
<div style="position:absolute;left:0px;top:765.0px;width:2400px;height:1px;background:#f0f0f0;"></div>
<div style="position:absolute;left:24px;top:18.0px;width:17.8px;height:18px;border:1.5px solid #767676;border-radius:3.5px;background:#fff"></div>
<div style="position:absolute;left:-393.5px;top:15.5px;height:30px;line-height:30px;font-size:21px;color:#333;font-weight:bold;white-space:nowrap;text-align:center;width:1000px;">ID</div>
<div style="position:absolute;left:-291.5px;top:15.5px;height:30px;line-height:30px;font-size:21px;color:#333;font-weight:bold;white-space:nowrap;text-align:center;width:1000px;">用户名</div>
<div style="position:absolute;left:-178.5px;top:15.5px;height:30px;line-height:30px;font-size:21px;color:#333;font-weight:bold;white-space:nowrap;text-align:center;width:1000px;">代理</div>
<div style="position:absolute;left:-80.0px;top:15.5px;height:30px;line-height:30px;font-size:21px;color:#333;font-weight:bold;white-space:nowrap;text-align:center;width:1000px;">上级ID</div>
<div style="position:absolute;left:242.5px;top:15.5px;height:30px;line-height:30px;font-size:21px;color:#333;font-weight:bold;white-space:nowrap;text-align:center;width:1000px;">对方地址</div>
<div style="position:absolute;left:556.0px;top:15.5px;height:30px;line-height:30px;font-size:21px;color:#333;font-weight:bold;white-space:nowrap;text-align:center;width:1000px;">类型</div>
<div style="position:absolute;left:660.5px;top:15.5px;height:30px;line-height:30px;font-size:21px;color:#333;font-weight:bold;white-space:nowrap;text-align:center;width:1000px;">链上余额</div>
<svg style="position:absolute;left:1208px;top:19.5px;" width="11" height="22" viewBox="0 0 11 22"><path d="M5.5,0 L11,9 L0,9 Z M5.5,22 L11,13 L0,13 Z" fill="#ddd"/></svg>
<div style="position:absolute;left:789.0px;top:15.5px;height:30px;line-height:30px;font-size:21px;color:#333;font-weight:bold;white-space:nowrap;text-align:center;width:1000px;">邀请码</div>
<div style="position:absolute;left:905.5px;top:15.5px;height:30px;line-height:30px;font-size:21px;color:#333;font-weight:bold;white-space:nowrap;text-align:center;width:1000px;">状态</div>
<div style="position:absolute;left:1028.0px;top:15.5px;height:30px;line-height:30px;font-size:21px;color:#333;font-weight:bold;white-space:nowrap;text-align:center;width:1000px;">秒合约单控</div>
<div style="position:absolute;left:24px;top:82.75px;width:17.8px;height:18px;border:1.5px solid #767676;border-radius:3.5px;background:#fff"></div>
<div style="position:absolute;left:-393.5px;top:80.75px;height:30px;line-height:30px;font-size:21px;color:#333;font-weight:normal;white-space:nowrap;text-align:center;width:1000px;">332</div>
<div style="position:absolute;left:-291.5px;top:80.75px;height:30px;line-height:30px;font-size:21px;color:#333;font-weight:normal;white-space:nowrap;text-align:center;width:1000px;">B7eCeF</div>
<div style="position:absolute;left:-178.5px;top:80.75px;height:30px;line-height:30px;font-size:21px;color:#333;font-weight:normal;white-space:nowrap;text-align:center;width:1000px;">admin</div>
<div style="position:absolute;left:-80.0px;top:80.75px;height:30px;line-height:30px;font-size:21px;color:#333;font-weight:normal;white-space:nowrap;text-align:center;width:1000px;">1</div>
<div style="position:absolute;left:242.5px;top:80.75px;height:30px;line-height:30px;font-size:21px;color:#348fe2;font-weight:normal;white-space:nowrap;text-align:center;width:1000px;">0x67f423709DbfA4Ca92bfbF871D3141201AB7eCeF</div>
<div style="position:absolute;left:556.0px;top:80.75px;height:30px;line-height:30px;font-size:21px;color:#333;font-weight:normal;white-space:nowrap;text-align:center;width:1000px;">erc</div>
<div style="position:absolute;left:660.5px;top:80.75px;height:30px;line-height:30px;font-size:21px;color:#333;font-weight:normal;white-space:nowrap;text-align:center;width:1000px;">0.000000</div>
<div style="position:absolute;left:789.0px;top:80.75px;height:30px;line-height:30px;font-size:21px;color:#333;font-weight:normal;white-space:nowrap;text-align:center;width:1000px;">t2W0ju</div>
<div style="position:absolute;left:1374.0px;top:80.75px;width:63px;height:30px;line-height:30px;font-size:21px;color:#3c8fe8;white-space:nowrap"><span>未授权</span></div>
<div style="position:absolute;left:1374.0px;top:107.55px;width:63px;height:1.2px;background:repeating-linear-gradient(90deg,#1a8ad0 0 3px,transparent 3px 5px)"></div>
<div style="position:absolute;left:1496.5px;top:80.75px;width:63px;height:30px;line-height:30px;font-size:21px;color:#3c8fe8;white-space:nowrap"><span>不控制</span></div>
<div style="position:absolute;left:1496.5px;top:107.55px;width:63px;height:1.2px;background:repeating-linear-gradient(90deg,#1a8ad0 0 3px,transparent 3px 5px)"></div>
<div style="position:absolute;left:1620.5px;top:80.75px;height:30px;line-height:30px;font-size:21px;color:#333;font-weight:normal;white-space:nowrap;text-align:left;">0x1A87C36c54689e7398FEb412D3AC185Af6086029</div>
<div style="position:absolute;left:24px;top:153.25px;width:17.8px;height:18px;border:1.5px solid #767676;border-radius:3.5px;background:#fff"></div>
<div style="position:absolute;left:-393.5px;top:151.25px;height:30px;line-height:30px;font-size:21px;color:#333;font-weight:normal;white-space:nowrap;text-align:center;width:1000px;">331</div>
<div style="position:absolute;left:-291.5px;top:151.25px;height:30px;line-height:30px;font-size:21px;color:#333;font-weight:normal;white-space:nowrap;text-align:center;width:1000px;">150965</div>
<div style="position:absolute;left:-178.5px;top:151.25px;height:30px;line-height:30px;font-size:21px;color:#333;font-weight:normal;white-space:nowrap;text-align:center;width:1000px;">admin</div>
<div style="position:absolute;left:-80.0px;top:151.25px;height:30px;line-height:30px;font-size:21px;color:#333;font-weight:normal;white-space:nowrap;text-align:center;width:1000px;">1</div>
<div style="position:absolute;left:242.5px;top:151.25px;height:30px;line-height:30px;font-size:21px;color:#348fe2;font-weight:normal;white-space:nowrap;text-align:center;width:1000px;">0x47694210254fd19f57f8635a6E1FD1587a150965</div>
<div style="position:absolute;left:556.0px;top:151.25px;height:30px;line-height:30px;font-size:21px;color:#333;font-weight:normal;white-space:nowrap;text-align:center;width:1000px;">erc</div>
<div style="position:absolute;left:660.5px;top:151.25px;height:30px;line-height:30px;font-size:21px;color:#333;font-weight:normal;white-space:nowrap;text-align:center;width:1000px;">0.000000</div>
<div style="position:absolute;left:789.0px;top:151.25px;height:30px;line-height:30px;font-size:21px;color:#333;font-weight:normal;white-space:nowrap;text-align:center;width:1000px;">eYzumZ</div>
<div style="position:absolute;left:1374.0px;top:151.25px;width:63px;height:30px;line-height:30px;font-size:21px;color:#3c8fe8;white-space:nowrap"><span>未授权</span></div>
<div style="position:absolute;left:1374.0px;top:178.05px;width:63px;height:1.2px;background:repeating-linear-gradient(90deg,#1a8ad0 0 3px,transparent 3px 5px)"></div>
<div style="position:absolute;left:1496.5px;top:151.25px;width:63px;height:30px;line-height:30px;font-size:21px;color:#3c8fe8;white-space:nowrap"><span>不控制</span></div>
<div style="position:absolute;left:1496.5px;top:178.05px;width:63px;height:1.2px;background:repeating-linear-gradient(90deg,#1a8ad0 0 3px,transparent 3px 5px)"></div>
<div style="position:absolute;left:1620.5px;top:151.25px;height:30px;line-height:30px;font-size:21px;color:#333;font-weight:normal;white-space:nowrap;text-align:left;">0x1A87C36c54689e7398FEb412D3AC185Af6086029</div>
<div style="position:absolute;left:24px;top:223.75px;width:17.8px;height:18px;border:1.5px solid #767676;border-radius:3.5px;background:#fff"></div>
<div style="position:absolute;left:-393.5px;top:221.75px;height:30px;line-height:30px;font-size:21px;color:#333;font-weight:normal;white-space:nowrap;text-align:center;width:1000px;">330</div>
<div style="position:absolute;left:-291.5px;top:221.75px;height:30px;line-height:30px;font-size:21px;color:#333;font-weight:normal;white-space:nowrap;text-align:center;width:1000px;">265912</div>
<div style="position:absolute;left:-178.5px;top:221.75px;height:30px;line-height:30px;font-size:21px;color:#333;font-weight:normal;white-space:nowrap;text-align:center;width:1000px;">admin</div>
<div style="position:absolute;left:-80.0px;top:221.75px;height:30px;line-height:30px;font-size:21px;color:#333;font-weight:normal;white-space:nowrap;text-align:center;width:1000px;">1</div>
<div style="position:absolute;left:242.5px;top:221.75px;height:30px;line-height:30px;font-size:21px;color:#348fe2;font-weight:normal;white-space:nowrap;text-align:center;width:1000px;">0xE82E8F8B7Aa35b86Af5E91171Bc0510d06265912</div>
<div style="position:absolute;left:556.0px;top:221.75px;height:30px;line-height:30px;font-size:21px;color:#333;font-weight:normal;white-space:nowrap;text-align:center;width:1000px;">erc</div>
<div style="position:absolute;left:660.5px;top:221.75px;height:30px;line-height:30px;font-size:21px;color:#333;font-weight:normal;white-space:nowrap;text-align:center;width:1000px;">0.000000</div>
<div style="position:absolute;left:789.0px;top:221.75px;height:30px;line-height:30px;font-size:21px;color:#333;font-weight:normal;white-space:nowrap;text-align:center;width:1000px;">WrgcBd</div>
<div style="position:absolute;left:1374.0px;top:221.75px;width:63px;height:30px;line-height:30px;font-size:21px;color:#3c8fe8;white-space:nowrap"><span>未授权</span></div>
<div style="position:absolute;left:1374.0px;top:248.55px;width:63px;height:1.2px;background:repeating-linear-gradient(90deg,#1a8ad0 0 3px,transparent 3px 5px)"></div>
<div style="position:absolute;left:1496.5px;top:221.75px;width:63px;height:30px;line-height:30px;font-size:21px;color:#3c8fe8;white-space:nowrap"><span>不控制</span></div>
<div style="position:absolute;left:1496.5px;top:248.55px;width:63px;height:1.2px;background:repeating-linear-gradient(90deg,#1a8ad0 0 3px,transparent 3px 5px)"></div>
<div style="position:absolute;left:1620.5px;top:221.75px;height:30px;line-height:30px;font-size:21px;color:#333;font-weight:normal;white-space:nowrap;text-align:left;">0x1A87C36c54689e7398FEb412D3AC185Af6086029</div>
<div style="position:absolute;left:24px;top:294.25px;width:17.8px;height:18px;border:1.5px solid #767676;border-radius:3.5px;background:#fff"></div>
<div style="position:absolute;left:-393.5px;top:292.25px;height:30px;line-height:30px;font-size:21px;color:#333;font-weight:normal;white-space:nowrap;text-align:center;width:1000px;">329</div>
<div style="position:absolute;left:-291.5px;top:292.25px;height:30px;line-height:30px;font-size:21px;color:#333;font-weight:normal;white-space:nowrap;text-align:center;width:1000px;">086029</div>
<div style="position:absolute;left:-178.5px;top:292.25px;height:30px;line-height:30px;font-size:21px;color:#333;font-weight:normal;white-space:nowrap;text-align:center;width:1000px;">admin</div>
<div style="position:absolute;left:-80.0px;top:292.25px;height:30px;line-height:30px;font-size:21px;color:#333;font-weight:normal;white-space:nowrap;text-align:center;width:1000px;">1</div>
<div style="position:absolute;left:242.5px;top:292.25px;height:30px;line-height:30px;font-size:21px;color:#348fe2;font-weight:normal;white-space:nowrap;text-align:center;width:1000px;">0x1A87C36c54689e7398FEb412D3AC185Af6086029</div>
<div style="position:absolute;left:556.0px;top:292.25px;height:30px;line-height:30px;font-size:21px;color:#333;font-weight:normal;white-space:nowrap;text-align:center;width:1000px;">erc</div>
<div style="position:absolute;left:660.5px;top:292.25px;height:30px;line-height:30px;font-size:21px;color:#333;font-weight:normal;white-space:nowrap;text-align:center;width:1000px;">0.000000</div>
<div style="position:absolute;left:789.0px;top:292.25px;height:30px;line-height:30px;font-size:21px;color:#333;font-weight:normal;white-space:nowrap;text-align:center;width:1000px;">X7KzkC</div>
<div style="position:absolute;left:1374.0px;top:292.25px;width:63px;height:30px;line-height:30px;font-size:21px;color:#3c8fe8;white-space:nowrap"><span>已授权</span></div>
<div style="position:absolute;left:1374.0px;top:319.05px;width:63px;height:1.2px;background:repeating-linear-gradient(90deg,#1a8ad0 0 3px,transparent 3px 5px)"></div>
<div style="position:absolute;left:1496.5px;top:292.25px;width:63px;height:30px;line-height:30px;font-size:21px;color:#3c8fe8;white-space:nowrap"><span>不控制</span></div>
<div style="position:absolute;left:1496.5px;top:319.05px;width:63px;height:1.2px;background:repeating-linear-gradient(90deg,#1a8ad0 0 3px,transparent 3px 5px)"></div>
<div style="position:absolute;left:1629.5px;top:292.25px;height:30px;line-height:30px;font-size:21px;color:#333;font-weight:normal;white-space:nowrap;text-align:left;">0xBa4f3e7C9a21d</div>
<div style="position:absolute;left:24px;top:364.75px;width:17.8px;height:18px;border:1.5px solid #767676;border-radius:3.5px;background:#fff"></div>
<div style="position:absolute;left:-393.5px;top:362.75px;height:30px;line-height:30px;font-size:21px;color:#333;font-weight:normal;white-space:nowrap;text-align:center;width:1000px;">328</div>
<div style="position:absolute;left:-291.5px;top:362.75px;height:30px;line-height:30px;font-size:21px;color:#333;font-weight:normal;white-space:nowrap;text-align:center;width:1000px;">33d65b</div>
<div style="position:absolute;left:-178.5px;top:362.75px;height:30px;line-height:30px;font-size:21px;color:#333;font-weight:normal;white-space:nowrap;text-align:center;width:1000px;">001</div>
<div style="position:absolute;left:-80.0px;top:362.75px;height:30px;line-height:30px;font-size:21px;color:#333;font-weight:normal;white-space:nowrap;text-align:center;width:1000px;">1</div>
<div style="position:absolute;left:242.5px;top:362.75px;height:30px;line-height:30px;font-size:21px;color:#348fe2;font-weight:normal;white-space:nowrap;text-align:center;width:1000px;">0xec1D993A40441C4ae07425a5BeCe1e58B933d65b</div>
<div style="position:absolute;left:556.0px;top:362.75px;height:30px;line-height:30px;font-size:21px;color:#333;font-weight:normal;white-space:nowrap;text-align:center;width:1000px;">erc</div>
<div style="position:absolute;left:660.5px;top:362.75px;height:30px;line-height:30px;font-size:21px;color:#333;font-weight:normal;white-space:nowrap;text-align:center;width:1000px;">0.000000</div>
<div style="position:absolute;left:789.0px;top:362.75px;height:30px;line-height:30px;font-size:21px;color:#333;font-weight:normal;white-space:nowrap;text-align:center;width:1000px;">mxr86M</div>
<div style="position:absolute;left:1374.0px;top:362.75px;width:63px;height:30px;line-height:30px;font-size:21px;color:#3c8fe8;white-space:nowrap"><span>已授权</span></div>
<div style="position:absolute;left:1374.0px;top:389.55px;width:63px;height:1.2px;background:repeating-linear-gradient(90deg,#1a8ad0 0 3px,transparent 3px 5px)"></div>
<div style="position:absolute;left:1496.5px;top:362.75px;width:63px;height:30px;line-height:30px;font-size:21px;color:#3c8fe8;white-space:nowrap"><span>不控制</span></div>
<div style="position:absolute;left:1496.5px;top:389.55px;width:63px;height:1.2px;background:repeating-linear-gradient(90deg,#1a8ad0 0 3px,transparent 3px 5px)"></div>
<div style="position:absolute;left:1629.5px;top:362.75px;height:30px;line-height:30px;font-size:21px;color:#333;font-weight:normal;white-space:nowrap;text-align:left;">0xBa4f3e7C9a21d</div>
<div style="position:absolute;left:24px;top:435.25px;width:17.8px;height:18px;border:1.5px solid #767676;border-radius:3.5px;background:#fff"></div>
<div style="position:absolute;left:-393.5px;top:433.25px;height:30px;line-height:30px;font-size:21px;color:#333;font-weight:normal;white-space:nowrap;text-align:center;width:1000px;">327</div>
<div style="position:absolute;left:-291.5px;top:433.25px;height:30px;line-height:30px;font-size:21px;color:#333;font-weight:normal;white-space:nowrap;text-align:center;width:1000px;">A378fc</div>
<div style="position:absolute;left:-178.5px;top:433.25px;height:30px;line-height:30px;font-size:21px;color:#333;font-weight:normal;white-space:nowrap;text-align:center;width:1000px;">admin</div>
<div style="position:absolute;left:-80.0px;top:433.25px;height:30px;line-height:30px;font-size:21px;color:#333;font-weight:normal;white-space:nowrap;text-align:center;width:1000px;">1</div>
<div style="position:absolute;left:242.5px;top:433.25px;height:30px;line-height:30px;font-size:21px;color:#348fe2;font-weight:normal;white-space:nowrap;text-align:center;width:1000px;">0x6E14A75f9ad166e8f4FcDfdE493581978AA378fc</div>
<div style="position:absolute;left:556.0px;top:433.25px;height:30px;line-height:30px;font-size:21px;color:#333;font-weight:normal;white-space:nowrap;text-align:center;width:1000px;">erc</div>
<div style="position:absolute;left:660.5px;top:433.25px;height:30px;line-height:30px;font-size:21px;color:#333;font-weight:normal;white-space:nowrap;text-align:center;width:1000px;">0.000000</div>
<div style="position:absolute;left:789.0px;top:433.25px;height:30px;line-height:30px;font-size:21px;color:#333;font-weight:normal;white-space:nowrap;text-align:center;width:1000px;">sV4fdY</div>
<div style="position:absolute;left:1374.0px;top:433.25px;width:63px;height:30px;line-height:30px;font-size:21px;color:#3c8fe8;white-space:nowrap"><span>未授权</span></div>
<div style="position:absolute;left:1374.0px;top:460.05px;width:63px;height:1.2px;background:repeating-linear-gradient(90deg,#1a8ad0 0 3px,transparent 3px 5px)"></div>
<div style="position:absolute;left:1496.5px;top:433.25px;width:63px;height:30px;line-height:30px;font-size:21px;color:#3c8fe8;white-space:nowrap"><span>不控制</span></div>
<div style="position:absolute;left:1496.5px;top:460.05px;width:63px;height:1.2px;background:repeating-linear-gradient(90deg,#1a8ad0 0 3px,transparent 3px 5px)"></div>
<div style="position:absolute;left:1629.5px;top:433.25px;height:30px;line-height:30px;font-size:21px;color:#333;font-weight:normal;white-space:nowrap;text-align:left;">0xBa4f3e7C9a21d</div>
<div style="position:absolute;left:24px;top:505.75px;width:17.8px;height:18px;border:1.5px solid #767676;border-radius:3.5px;background:#fff"></div>
<div style="position:absolute;left:-393.5px;top:503.75px;height:30px;line-height:30px;font-size:21px;color:#333;font-weight:normal;white-space:nowrap;text-align:center;width:1000px;">326</div>
<div style="position:absolute;left:-291.5px;top:503.75px;height:30px;line-height:30px;font-size:21px;color:#333;font-weight:normal;white-space:nowrap;text-align:center;width:1000px;">77940b</div>
<div style="position:absolute;left:-178.5px;top:503.75px;height:30px;line-height:30px;font-size:21px;color:#333;font-weight:normal;white-space:nowrap;text-align:center;width:1000px;">admin</div>
<div style="position:absolute;left:-80.0px;top:503.75px;height:30px;line-height:30px;font-size:21px;color:#333;font-weight:normal;white-space:nowrap;text-align:center;width:1000px;">1</div>
<div style="position:absolute;left:242.5px;top:503.75px;height:30px;line-height:30px;font-size:21px;color:#348fe2;font-weight:normal;white-space:nowrap;text-align:center;width:1000px;">0xc3febA679A89C38C7362594Da646473d0D77940b</div>
<div style="position:absolute;left:556.0px;top:503.75px;height:30px;line-height:30px;font-size:21px;color:#333;font-weight:normal;white-space:nowrap;text-align:center;width:1000px;">erc</div>
<div style="position:absolute;left:660.5px;top:503.75px;height:30px;line-height:30px;font-size:21px;color:#333;font-weight:normal;white-space:nowrap;text-align:center;width:1000px;">0.000000</div>
<div style="position:absolute;left:789.0px;top:503.75px;height:30px;line-height:30px;font-size:21px;color:#333;font-weight:normal;white-space:nowrap;text-align:center;width:1000px;">AZgyiP</div>
<div style="position:absolute;left:1374.0px;top:503.75px;width:63px;height:30px;line-height:30px;font-size:21px;color:#3c8fe8;white-space:nowrap"><span>未授权</span></div>
<div style="position:absolute;left:1374.0px;top:530.55px;width:63px;height:1.2px;background:repeating-linear-gradient(90deg,#1a8ad0 0 3px,transparent 3px 5px)"></div>
<div style="position:absolute;left:1496.5px;top:503.75px;width:63px;height:30px;line-height:30px;font-size:21px;color:#3c8fe8;white-space:nowrap"><span>不控制</span></div>
<div style="position:absolute;left:1496.5px;top:530.55px;width:63px;height:1.2px;background:repeating-linear-gradient(90deg,#1a8ad0 0 3px,transparent 3px 5px)"></div>
<div style="position:absolute;left:1629.5px;top:503.75px;height:30px;line-height:30px;font-size:21px;color:#333;font-weight:normal;white-space:nowrap;text-align:left;">0xBa4f3e7C9a21d</div>
<div style="position:absolute;left:24px;top:576.25px;width:17.8px;height:18px;border:1.5px solid #767676;border-radius:3.5px;background:#fff"></div>
<div style="position:absolute;left:-393.5px;top:574.25px;height:30px;line-height:30px;font-size:21px;color:#333;font-weight:normal;white-space:nowrap;text-align:center;width:1000px;">325</div>
<div style="position:absolute;left:-291.5px;top:574.25px;height:30px;line-height:30px;font-size:21px;color:#333;font-weight:normal;white-space:nowrap;text-align:center;width:1000px;">FE3494</div>
<div style="position:absolute;left:-178.5px;top:574.25px;height:30px;line-height:30px;font-size:21px;color:#333;font-weight:normal;white-space:nowrap;text-align:center;width:1000px;">admin</div>
<div style="position:absolute;left:-80.0px;top:574.25px;height:30px;line-height:30px;font-size:21px;color:#333;font-weight:normal;white-space:nowrap;text-align:center;width:1000px;">1</div>
<div style="position:absolute;left:242.5px;top:574.25px;height:30px;line-height:30px;font-size:21px;color:#348fe2;font-weight:normal;white-space:nowrap;text-align:center;width:1000px;">0x1b36ac1B54ec51b4f8B49a454d6f9a8fACFE3494</div>
<div style="position:absolute;left:556.0px;top:574.25px;height:30px;line-height:30px;font-size:21px;color:#333;font-weight:normal;white-space:nowrap;text-align:center;width:1000px;">erc</div>
<div style="position:absolute;left:660.5px;top:574.25px;height:30px;line-height:30px;font-size:21px;color:#333;font-weight:normal;white-space:nowrap;text-align:center;width:1000px;">0.000000</div>
<div style="position:absolute;left:789.0px;top:574.25px;height:30px;line-height:30px;font-size:21px;color:#333;font-weight:normal;white-space:nowrap;text-align:center;width:1000px;">FtRDxi</div>
<div style="position:absolute;left:1374.0px;top:574.25px;width:63px;height:30px;line-height:30px;font-size:21px;color:#3c8fe8;white-space:nowrap"><span>未授权</span></div>
<div style="position:absolute;left:1374.0px;top:601.05px;width:63px;height:1.2px;background:repeating-linear-gradient(90deg,#1a8ad0 0 3px,transparent 3px 5px)"></div>
<div style="position:absolute;left:1496.5px;top:574.25px;width:63px;height:30px;line-height:30px;font-size:21px;color:#3c8fe8;white-space:nowrap"><span>不控制</span></div>
<div style="position:absolute;left:1496.5px;top:601.05px;width:63px;height:1.2px;background:repeating-linear-gradient(90deg,#1a8ad0 0 3px,transparent 3px 5px)"></div>
<div style="position:absolute;left:1629.5px;top:574.25px;height:30px;line-height:30px;font-size:21px;color:#333;font-weight:normal;white-space:nowrap;text-align:left;">0xBa4f3e7C9a21d</div>
<div style="position:absolute;left:24px;top:646.75px;width:17.8px;height:18px;border:1.5px solid #767676;border-radius:3.5px;background:#fff"></div>
<div style="position:absolute;left:-393.5px;top:644.75px;height:30px;line-height:30px;font-size:21px;color:#333;font-weight:normal;white-space:nowrap;text-align:center;width:1000px;">324</div>
<div style="position:absolute;left:-291.5px;top:644.75px;height:30px;line-height:30px;font-size:21px;color:#333;font-weight:normal;white-space:nowrap;text-align:center;width:1000px;">Bd3641</div>
<div style="position:absolute;left:-178.5px;top:644.75px;height:30px;line-height:30px;font-size:21px;color:#333;font-weight:normal;white-space:nowrap;text-align:center;width:1000px;">admin</div>
<div style="position:absolute;left:-80.0px;top:644.75px;height:30px;line-height:30px;font-size:21px;color:#333;font-weight:normal;white-space:nowrap;text-align:center;width:1000px;">1</div>
<div style="position:absolute;left:242.5px;top:644.75px;height:30px;line-height:30px;font-size:21px;color:#348fe2;font-weight:normal;white-space:nowrap;text-align:center;width:1000px;">0x4d8B27c4c905d62df7d12198DA4fecaC54Bd3641</div>
<div style="position:absolute;left:556.0px;top:644.75px;height:30px;line-height:30px;font-size:21px;color:#333;font-weight:normal;white-space:nowrap;text-align:center;width:1000px;">erc</div>
<div style="position:absolute;left:660.5px;top:644.75px;height:30px;line-height:30px;font-size:21px;color:#333;font-weight:normal;white-space:nowrap;text-align:center;width:1000px;">0.000000</div>
<div style="position:absolute;left:789.0px;top:644.75px;height:30px;line-height:30px;font-size:21px;color:#333;font-weight:normal;white-space:nowrap;text-align:center;width:1000px;">IXkosO</div>
<div style="position:absolute;left:1374.0px;top:644.75px;width:63px;height:30px;line-height:30px;font-size:21px;color:#3c8fe8;white-space:nowrap"><span>未授权</span></div>
<div style="position:absolute;left:1374.0px;top:671.55px;width:63px;height:1.2px;background:repeating-linear-gradient(90deg,#1a8ad0 0 3px,transparent 3px 5px)"></div>
<div style="position:absolute;left:1496.5px;top:644.75px;width:63px;height:30px;line-height:30px;font-size:21px;color:#3c8fe8;white-space:nowrap"><span>不控制</span></div>
<div style="position:absolute;left:1496.5px;top:671.55px;width:63px;height:1.2px;background:repeating-linear-gradient(90deg,#1a8ad0 0 3px,transparent 3px 5px)"></div>
<div style="position:absolute;left:1629.5px;top:644.75px;height:30px;line-height:30px;font-size:21px;color:#333;font-weight:normal;white-space:nowrap;text-align:left;">0xBa4f3e7C9a21d</div>
<div style="position:absolute;left:24px;top:717.25px;width:17.8px;height:18px;border:1.5px solid #767676;border-radius:3.5px;background:#fff"></div>
<div style="position:absolute;left:-393.5px;top:715.25px;height:30px;line-height:30px;font-size:21px;color:#333;font-weight:normal;white-space:nowrap;text-align:center;width:1000px;">323</div>
<div style="position:absolute;left:-291.5px;top:715.25px;height:30px;line-height:30px;font-size:21px;color:#333;font-weight:normal;white-space:nowrap;text-align:center;width:1000px;">a25c9e</div>
<div style="position:absolute;left:-178.5px;top:715.25px;height:30px;line-height:30px;font-size:21px;color:#333;font-weight:normal;white-space:nowrap;text-align:center;width:1000px;">001</div>
<div style="position:absolute;left:-80.0px;top:715.25px;height:30px;line-height:30px;font-size:21px;color:#333;font-weight:normal;white-space:nowrap;text-align:center;width:1000px;">1</div>
<div style="position:absolute;left:242.5px;top:715.25px;height:30px;line-height:30px;font-size:21px;color:#348fe2;font-weight:normal;white-space:nowrap;text-align:center;width:1000px;">0x7264ba706C9efDA54Ac2668E4c3A7eE686a25c9e</div>
<div style="position:absolute;left:556.0px;top:715.25px;height:30px;line-height:30px;font-size:21px;color:#333;font-weight:normal;white-space:nowrap;text-align:center;width:1000px;">erc</div>
<div style="position:absolute;left:660.5px;top:715.25px;height:30px;line-height:30px;font-size:21px;color:#333;font-weight:normal;white-space:nowrap;text-align:center;width:1000px;">0.000000</div>
<div style="position:absolute;left:789.0px;top:715.25px;height:30px;line-height:30px;font-size:21px;color:#333;font-weight:normal;white-space:nowrap;text-align:center;width:1000px;">fclhpW</div>
<div style="position:absolute;left:1374.0px;top:715.25px;width:63px;height:30px;line-height:30px;font-size:21px;color:#3c8fe8;white-space:nowrap"><span>已授权</span></div>
<div style="position:absolute;left:1374.0px;top:742.05px;width:63px;height:1.2px;background:repeating-linear-gradient(90deg,#1a8ad0 0 3px,transparent 3px 5px)"></div>
<div style="position:absolute;left:1496.5px;top:715.25px;width:63px;height:30px;line-height:30px;font-size:21px;color:#3c8fe8;white-space:nowrap"><span>不控制</span></div>
<div style="position:absolute;left:1496.5px;top:742.05px;width:63px;height:1.2px;background:repeating-linear-gradient(90deg,#1a8ad0 0 3px,transparent 3px 5px)"></div>
<div style="position:absolute;left:1629.5px;top:715.25px;height:30px;line-height:30px;font-size:21px;color:#333;font-weight:normal;white-space:nowrap;text-align:left;">0xBa4f3e7C9a21d</div>
</div>
<div style="position:absolute;left:2063.5px;top:417.5px;width:428.5px;height:766.0px;background:#fff;box-shadow:0 0 12px rgba(0,0,0,0.09);overflow:hidden">
<div style="position:absolute;left:0px;top:0px;width:500px;height:1px;background:#f0f0f0;"></div>
<div style="position:absolute;left:0px;top:60.5px;width:500px;height:70.5px;background:#f9f9f9;"></div>
<div style="position:absolute;left:0px;top:131.0px;width:500px;height:70.5px;background:#f5f5f5;"></div>
<div style="position:absolute;left:0px;top:201.5px;width:500px;height:70.5px;background:#f9f9f9;"></div>
<div style="position:absolute;left:0px;top:272.0px;width:500px;height:70.5px;background:#fff;"></div>
<div style="position:absolute;left:0px;top:342.5px;width:500px;height:70.5px;background:#f9f9f9;"></div>
<div style="position:absolute;left:0px;top:413.0px;width:500px;height:70.5px;background:#fff;"></div>
<div style="position:absolute;left:0px;top:483.5px;width:500px;height:70.5px;background:#f9f9f9;"></div>
<div style="position:absolute;left:0px;top:554.0px;width:500px;height:70.5px;background:#fff;"></div>
<div style="position:absolute;left:0px;top:624.5px;width:500px;height:70.5px;background:#f9f9f9;"></div>
<div style="position:absolute;left:0px;top:695.0px;width:500px;height:70.5px;background:#fff;"></div>
<div style="position:absolute;left:0px;top:60.0px;width:500px;height:1.5px;background:#ddd;"></div>
<div style="position:absolute;left:0px;top:130.5px;width:500px;height:1px;background:#f0f0f0;"></div>
<div style="position:absolute;left:0px;top:201.0px;width:500px;height:1px;background:#f0f0f0;"></div>
<div style="position:absolute;left:0px;top:271.5px;width:500px;height:1px;background:#f0f0f0;"></div>
<div style="position:absolute;left:0px;top:342.0px;width:500px;height:1px;background:#f0f0f0;"></div>
<div style="position:absolute;left:0px;top:412.5px;width:500px;height:1px;background:#f0f0f0;"></div>
<div style="position:absolute;left:0px;top:483.0px;width:500px;height:1px;background:#f0f0f0;"></div>
<div style="position:absolute;left:0px;top:553.5px;width:500px;height:1px;background:#f0f0f0;"></div>
<div style="position:absolute;left:0px;top:624.0px;width:500px;height:1px;background:#f0f0f0;"></div>
<div style="position:absolute;left:0px;top:694.5px;width:500px;height:1px;background:#f0f0f0;"></div>
<div style="position:absolute;left:0px;top:765.0px;width:500px;height:1px;background:#f0f0f0;"></div>
<div style="position:absolute;left:-285.5px;top:15.5px;height:30px;line-height:30px;font-size:21px;color:#333;font-weight:bold;white-space:nowrap;text-align:center;width:1000px;">操作</div>
<div style="position:absolute;left:23.5px;top:80.25px;width:110px;height:32px;border-radius:4px;background:#1688f0"></div>
<svg style="position:absolute;left:31.0px;top:85.25px;" width="19" height="18" viewBox="0 0 19 18"><path d="M2.4,15.6 L15.9,2.3" stroke="#fff" stroke-width="4.2"/><path d="M12,5.8 L14.6,3.3" stroke="#1688f0" stroke-width="1.1"/><path d="M3.4,0.10000000000000009 L4.0,1.0 L4.9,1.6 L4.0,2.2 L3.4,3.1 L2.8,2.2 L1.9,1.6 L2.8,1.0 Z" fill="#fff"/><path d="M9.8,0.10000000000000009 L10.4,1.0 L11.3,1.6 L10.4,2.2 L9.8,3.1 L9.200000000000001,2.2 L8.3,1.6 L9.200000000000001,1.0 Z" fill="#fff"/><path d="M6.6,1.9000000000000004 L7.52,3.2800000000000002 L8.899999999999999,4.2 L7.52,5.12 L6.6,6.5 L5.68,5.12 L4.3,4.2 L5.68,3.2800000000000002 Z" fill="#fff"/><path d="M16.2,6.8999999999999995 L16.88,7.92 L17.9,8.6 L16.88,9.28 L16.2,10.299999999999999 L15.52,9.28 L14.5,8.6 L15.52,7.92 Z" fill="#fff"/></svg>
<div style="position:absolute;left:52.75px;top:80.25px;height:30px;line-height:30px;font-size:18px;color:#fff;font-weight:normal;white-space:nowrap;text-align:left;">更新余额</div>
<div style="position:absolute;left:139.5px;top:80.25px;width:111px;height:32px;border-radius:4px;background:#f39c12"></div>
<svg style="position:absolute;left:147.0px;top:86.25px;" width="19" height="16" viewBox="0 0 19 16"><path d="M1.5,3 Q1.5,1.2 3.3,1.2 L7.3,1.2 Q8.5,1.2 8.9,2.3 L9.3,3.3 L16.2,3.3 Q18,3.3 18,5.1 L18,13.3 Q18,15.1 16.2,15.1 L3.3,15.1 Q1.5,15.1 1.5,13.3 Z" fill="none" stroke="#fff" stroke-width="2"/></svg>
<div style="position:absolute;left:169.5px;top:80.25px;height:30px;line-height:30px;font-size:18px;color:#fff;font-weight:normal;white-space:nowrap;text-align:left;">是否同步</div>
<div style="position:absolute;left:256.5px;top:80.25px;width:75px;height:32px;border-radius:4px;background:#1688f0"></div>
<svg style="position:absolute;left:264.0px;top:85.25px;" width="19" height="18" viewBox="0 0 19 18"><path d="M2.4,15.6 L15.9,2.3" stroke="#fff" stroke-width="4.2"/><path d="M12,5.8 L14.6,3.3" stroke="#1688f0" stroke-width="1.1"/><path d="M3.4,0.10000000000000009 L4.0,1.0 L4.9,1.6 L4.0,2.2 L3.4,3.1 L2.8,2.2 L1.9,1.6 L2.8,1.0 Z" fill="#fff"/><path d="M9.8,0.10000000000000009 L10.4,1.0 L11.3,1.6 L10.4,2.2 L9.8,3.1 L9.200000000000001,2.2 L8.3,1.6 L9.200000000000001,1.0 Z" fill="#fff"/><path d="M6.6,1.9000000000000004 L7.52,3.2800000000000002 L8.899999999999999,4.2 L7.52,5.12 L6.6,6.5 L5.68,5.12 L4.3,4.2 L5.68,3.2800000000000002 Z" fill="#fff"/><path d="M16.2,6.8999999999999995 L16.88,7.92 L17.9,8.6 L16.88,9.28 L16.2,10.299999999999999 L15.52,9.28 L14.5,8.6 L15.52,7.92 Z" fill="#fff"/></svg>
<div style="position:absolute;left:285.75px;top:80.25px;height:30px;line-height:30px;font-size:18px;color:#fff;font-weight:normal;white-space:nowrap;text-align:left;">提现</div>
<div style="position:absolute;left:336.5px;top:80.25px;width:33px;height:32px;border-radius:4px;background:#18bc9c"></div>
<svg style="position:absolute;left:344.5px;top:87.0px;" width="17" height="17" viewBox="0 0 17 17"><path d="M0.4,16.1 L0.4,12.2 L12.3,0.3 Q12.9,-0.3 13.5,0.3 L16.3,3.1 Q16.9,3.7 16.3,4.3 L4.3,16.1 Z" fill="#fff"/><path d="M10,2.6 L13.8,6.4 M2.7,11.8 L4.9,14.1" stroke="#18bc9c" stroke-width="1"/></svg>
<div style="position:absolute;left:375.5px;top:80.25px;width:31px;height:32px;border-radius:4px;background:#f75444"></div>
<svg style="position:absolute;left:383.0px;top:86.0px;" width="16" height="17" viewBox="0 0 16 17"><rect x="3.8" y="0.5" width="7.7" height="4" rx="1.6" fill="#fff"/><rect x="6.3" y="2.4" width="2.2" height="1.1" fill="#f75444"/><rect x="0.3" y="3.5" width="15.2" height="2.3" rx="1" fill="#fff"/><path d="M1.3,5.5 L14.2,5.5 L13.9,15.3 Q13.9,17 12.2,17 L3.3,17 Q1.6,17 1.6,15.3 Z" fill="#fff"/><rect x="4.5" y="7" width="1.3" height="7.7" fill="#f75444" opacity="0.6"/><rect x="7.2" y="7" width="1.3" height="7.7" fill="#f75444" opacity="0.6"/><rect x="9.9" y="7" width="1.3" height="7.7" fill="#f75444" opacity="0.6"/></svg>
<div style="position:absolute;left:23.5px;top:150.75px;width:110px;height:32px;border-radius:4px;background:#1688f0"></div>
<svg style="position:absolute;left:31.0px;top:155.75px;" width="19" height="18" viewBox="0 0 19 18"><path d="M2.4,15.6 L15.9,2.3" stroke="#fff" stroke-width="4.2"/><path d="M12,5.8 L14.6,3.3" stroke="#1688f0" stroke-width="1.1"/><path d="M3.4,0.10000000000000009 L4.0,1.0 L4.9,1.6 L4.0,2.2 L3.4,3.1 L2.8,2.2 L1.9,1.6 L2.8,1.0 Z" fill="#fff"/><path d="M9.8,0.10000000000000009 L10.4,1.0 L11.3,1.6 L10.4,2.2 L9.8,3.1 L9.200000000000001,2.2 L8.3,1.6 L9.200000000000001,1.0 Z" fill="#fff"/><path d="M6.6,1.9000000000000004 L7.52,3.2800000000000002 L8.899999999999999,4.2 L7.52,5.12 L6.6,6.5 L5.68,5.12 L4.3,4.2 L5.68,3.2800000000000002 Z" fill="#fff"/><path d="M16.2,6.8999999999999995 L16.88,7.92 L17.9,8.6 L16.88,9.28 L16.2,10.299999999999999 L15.52,9.28 L14.5,8.6 L15.52,7.92 Z" fill="#fff"/></svg>
<div style="position:absolute;left:52.75px;top:150.75px;height:30px;line-height:30px;font-size:18px;color:#fff;font-weight:normal;white-space:nowrap;text-align:left;">更新余额</div>
<div style="position:absolute;left:139.5px;top:150.75px;width:111px;height:32px;border-radius:4px;background:#f39c12"></div>
<svg style="position:absolute;left:147.0px;top:156.75px;" width="19" height="16" viewBox="0 0 19 16"><path d="M1.5,3 Q1.5,1.2 3.3,1.2 L7.3,1.2 Q8.5,1.2 8.9,2.3 L9.3,3.3 L16.2,3.3 Q18,3.3 18,5.1 L18,13.3 Q18,15.1 16.2,15.1 L3.3,15.1 Q1.5,15.1 1.5,13.3 Z" fill="none" stroke="#fff" stroke-width="2"/></svg>
<div style="position:absolute;left:169.5px;top:150.75px;height:30px;line-height:30px;font-size:18px;color:#fff;font-weight:normal;white-space:nowrap;text-align:left;">是否同步</div>
<div style="position:absolute;left:256.5px;top:150.75px;width:75px;height:32px;border-radius:4px;background:#1688f0"></div>
<svg style="position:absolute;left:264.0px;top:155.75px;" width="19" height="18" viewBox="0 0 19 18"><path d="M2.4,15.6 L15.9,2.3" stroke="#fff" stroke-width="4.2"/><path d="M12,5.8 L14.6,3.3" stroke="#1688f0" stroke-width="1.1"/><path d="M3.4,0.10000000000000009 L4.0,1.0 L4.9,1.6 L4.0,2.2 L3.4,3.1 L2.8,2.2 L1.9,1.6 L2.8,1.0 Z" fill="#fff"/><path d="M9.8,0.10000000000000009 L10.4,1.0 L11.3,1.6 L10.4,2.2 L9.8,3.1 L9.200000000000001,2.2 L8.3,1.6 L9.200000000000001,1.0 Z" fill="#fff"/><path d="M6.6,1.9000000000000004 L7.52,3.2800000000000002 L8.899999999999999,4.2 L7.52,5.12 L6.6,6.5 L5.68,5.12 L4.3,4.2 L5.68,3.2800000000000002 Z" fill="#fff"/><path d="M16.2,6.8999999999999995 L16.88,7.92 L17.9,8.6 L16.88,9.28 L16.2,10.299999999999999 L15.52,9.28 L14.5,8.6 L15.52,7.92 Z" fill="#fff"/></svg>
<div style="position:absolute;left:285.75px;top:150.75px;height:30px;line-height:30px;font-size:18px;color:#fff;font-weight:normal;white-space:nowrap;text-align:left;">提现</div>
<div style="position:absolute;left:336.5px;top:150.75px;width:33px;height:32px;border-radius:4px;background:#18bc9c"></div>
<svg style="position:absolute;left:344.5px;top:157.5px;" width="17" height="17" viewBox="0 0 17 17"><path d="M0.4,16.1 L0.4,12.2 L12.3,0.3 Q12.9,-0.3 13.5,0.3 L16.3,3.1 Q16.9,3.7 16.3,4.3 L4.3,16.1 Z" fill="#fff"/><path d="M10,2.6 L13.8,6.4 M2.7,11.8 L4.9,14.1" stroke="#18bc9c" stroke-width="1"/></svg>
<div style="position:absolute;left:375.5px;top:150.75px;width:31px;height:32px;border-radius:4px;background:#f75444"></div>
<svg style="position:absolute;left:383.0px;top:156.5px;" width="16" height="17" viewBox="0 0 16 17"><rect x="3.8" y="0.5" width="7.7" height="4" rx="1.6" fill="#fff"/><rect x="6.3" y="2.4" width="2.2" height="1.1" fill="#f75444"/><rect x="0.3" y="3.5" width="15.2" height="2.3" rx="1" fill="#fff"/><path d="M1.3,5.5 L14.2,5.5 L13.9,15.3 Q13.9,17 12.2,17 L3.3,17 Q1.6,17 1.6,15.3 Z" fill="#fff"/><rect x="4.5" y="7" width="1.3" height="7.7" fill="#f75444" opacity="0.6"/><rect x="7.2" y="7" width="1.3" height="7.7" fill="#f75444" opacity="0.6"/><rect x="9.9" y="7" width="1.3" height="7.7" fill="#f75444" opacity="0.6"/></svg>
<div style="position:absolute;left:23.5px;top:221.25px;width:110px;height:32px;border-radius:4px;background:#1688f0"></div>
<svg style="position:absolute;left:31.0px;top:226.25px;" width="19" height="18" viewBox="0 0 19 18"><path d="M2.4,15.6 L15.9,2.3" stroke="#fff" stroke-width="4.2"/><path d="M12,5.8 L14.6,3.3" stroke="#1688f0" stroke-width="1.1"/><path d="M3.4,0.10000000000000009 L4.0,1.0 L4.9,1.6 L4.0,2.2 L3.4,3.1 L2.8,2.2 L1.9,1.6 L2.8,1.0 Z" fill="#fff"/><path d="M9.8,0.10000000000000009 L10.4,1.0 L11.3,1.6 L10.4,2.2 L9.8,3.1 L9.200000000000001,2.2 L8.3,1.6 L9.200000000000001,1.0 Z" fill="#fff"/><path d="M6.6,1.9000000000000004 L7.52,3.2800000000000002 L8.899999999999999,4.2 L7.52,5.12 L6.6,6.5 L5.68,5.12 L4.3,4.2 L5.68,3.2800000000000002 Z" fill="#fff"/><path d="M16.2,6.8999999999999995 L16.88,7.92 L17.9,8.6 L16.88,9.28 L16.2,10.299999999999999 L15.52,9.28 L14.5,8.6 L15.52,7.92 Z" fill="#fff"/></svg>
<div style="position:absolute;left:52.75px;top:221.25px;height:30px;line-height:30px;font-size:18px;color:#fff;font-weight:normal;white-space:nowrap;text-align:left;">更新余额</div>
<div style="position:absolute;left:139.5px;top:221.25px;width:111px;height:32px;border-radius:4px;background:#f39c12"></div>
<svg style="position:absolute;left:147.0px;top:227.25px;" width="19" height="16" viewBox="0 0 19 16"><path d="M1.5,3 Q1.5,1.2 3.3,1.2 L7.3,1.2 Q8.5,1.2 8.9,2.3 L9.3,3.3 L16.2,3.3 Q18,3.3 18,5.1 L18,13.3 Q18,15.1 16.2,15.1 L3.3,15.1 Q1.5,15.1 1.5,13.3 Z" fill="none" stroke="#fff" stroke-width="2"/></svg>
<div style="position:absolute;left:169.5px;top:221.25px;height:30px;line-height:30px;font-size:18px;color:#fff;font-weight:normal;white-space:nowrap;text-align:left;">是否同步</div>
<div style="position:absolute;left:256.5px;top:221.25px;width:75px;height:32px;border-radius:4px;background:#1688f0"></div>
<svg style="position:absolute;left:264.0px;top:226.25px;" width="19" height="18" viewBox="0 0 19 18"><path d="M2.4,15.6 L15.9,2.3" stroke="#fff" stroke-width="4.2"/><path d="M12,5.8 L14.6,3.3" stroke="#1688f0" stroke-width="1.1"/><path d="M3.4,0.10000000000000009 L4.0,1.0 L4.9,1.6 L4.0,2.2 L3.4,3.1 L2.8,2.2 L1.9,1.6 L2.8,1.0 Z" fill="#fff"/><path d="M9.8,0.10000000000000009 L10.4,1.0 L11.3,1.6 L10.4,2.2 L9.8,3.1 L9.200000000000001,2.2 L8.3,1.6 L9.200000000000001,1.0 Z" fill="#fff"/><path d="M6.6,1.9000000000000004 L7.52,3.2800000000000002 L8.899999999999999,4.2 L7.52,5.12 L6.6,6.5 L5.68,5.12 L4.3,4.2 L5.68,3.2800000000000002 Z" fill="#fff"/><path d="M16.2,6.8999999999999995 L16.88,7.92 L17.9,8.6 L16.88,9.28 L16.2,10.299999999999999 L15.52,9.28 L14.5,8.6 L15.52,7.92 Z" fill="#fff"/></svg>
<div style="position:absolute;left:285.75px;top:221.25px;height:30px;line-height:30px;font-size:18px;color:#fff;font-weight:normal;white-space:nowrap;text-align:left;">提现</div>
<div style="position:absolute;left:336.5px;top:221.25px;width:33px;height:32px;border-radius:4px;background:#18bc9c"></div>
<svg style="position:absolute;left:344.5px;top:228.0px;" width="17" height="17" viewBox="0 0 17 17"><path d="M0.4,16.1 L0.4,12.2 L12.3,0.3 Q12.9,-0.3 13.5,0.3 L16.3,3.1 Q16.9,3.7 16.3,4.3 L4.3,16.1 Z" fill="#fff"/><path d="M10,2.6 L13.8,6.4 M2.7,11.8 L4.9,14.1" stroke="#18bc9c" stroke-width="1"/></svg>
<div style="position:absolute;left:375.5px;top:221.25px;width:31px;height:32px;border-radius:4px;background:#f75444"></div>
<svg style="position:absolute;left:383.0px;top:227.0px;" width="16" height="17" viewBox="0 0 16 17"><rect x="3.8" y="0.5" width="7.7" height="4" rx="1.6" fill="#fff"/><rect x="6.3" y="2.4" width="2.2" height="1.1" fill="#f75444"/><rect x="0.3" y="3.5" width="15.2" height="2.3" rx="1" fill="#fff"/><path d="M1.3,5.5 L14.2,5.5 L13.9,15.3 Q13.9,17 12.2,17 L3.3,17 Q1.6,17 1.6,15.3 Z" fill="#fff"/><rect x="4.5" y="7" width="1.3" height="7.7" fill="#f75444" opacity="0.6"/><rect x="7.2" y="7" width="1.3" height="7.7" fill="#f75444" opacity="0.6"/><rect x="9.9" y="7" width="1.3" height="7.7" fill="#f75444" opacity="0.6"/></svg>
<div style="position:absolute;left:23.5px;top:291.75px;width:110px;height:32px;border-radius:4px;background:#1688f0"></div>
<svg style="position:absolute;left:31.0px;top:296.75px;" width="19" height="18" viewBox="0 0 19 18"><path d="M2.4,15.6 L15.9,2.3" stroke="#fff" stroke-width="4.2"/><path d="M12,5.8 L14.6,3.3" stroke="#1688f0" stroke-width="1.1"/><path d="M3.4,0.10000000000000009 L4.0,1.0 L4.9,1.6 L4.0,2.2 L3.4,3.1 L2.8,2.2 L1.9,1.6 L2.8,1.0 Z" fill="#fff"/><path d="M9.8,0.10000000000000009 L10.4,1.0 L11.3,1.6 L10.4,2.2 L9.8,3.1 L9.200000000000001,2.2 L8.3,1.6 L9.200000000000001,1.0 Z" fill="#fff"/><path d="M6.6,1.9000000000000004 L7.52,3.2800000000000002 L8.899999999999999,4.2 L7.52,5.12 L6.6,6.5 L5.68,5.12 L4.3,4.2 L5.68,3.2800000000000002 Z" fill="#fff"/><path d="M16.2,6.8999999999999995 L16.88,7.92 L17.9,8.6 L16.88,9.28 L16.2,10.299999999999999 L15.52,9.28 L14.5,8.6 L15.52,7.92 Z" fill="#fff"/></svg>
<div style="position:absolute;left:52.75px;top:291.75px;height:30px;line-height:30px;font-size:18px;color:#fff;font-weight:normal;white-space:nowrap;text-align:left;">更新余额</div>
<div style="position:absolute;left:139.5px;top:291.75px;width:111px;height:32px;border-radius:4px;background:#f39c12"></div>
<svg style="position:absolute;left:147.0px;top:297.75px;" width="19" height="16" viewBox="0 0 19 16"><path d="M1.5,3 Q1.5,1.2 3.3,1.2 L7.3,1.2 Q8.5,1.2 8.9,2.3 L9.3,3.3 L16.2,3.3 Q18,3.3 18,5.1 L18,13.3 Q18,15.1 16.2,15.1 L3.3,15.1 Q1.5,15.1 1.5,13.3 Z" fill="none" stroke="#fff" stroke-width="2"/></svg>
<div style="position:absolute;left:169.5px;top:291.75px;height:30px;line-height:30px;font-size:18px;color:#fff;font-weight:normal;white-space:nowrap;text-align:left;">是否同步</div>
<div style="position:absolute;left:256.5px;top:291.75px;width:75px;height:32px;border-radius:4px;background:#1688f0"></div>
<svg style="position:absolute;left:264.0px;top:296.75px;" width="19" height="18" viewBox="0 0 19 18"><path d="M2.4,15.6 L15.9,2.3" stroke="#fff" stroke-width="4.2"/><path d="M12,5.8 L14.6,3.3" stroke="#1688f0" stroke-width="1.1"/><path d="M3.4,0.10000000000000009 L4.0,1.0 L4.9,1.6 L4.0,2.2 L3.4,3.1 L2.8,2.2 L1.9,1.6 L2.8,1.0 Z" fill="#fff"/><path d="M9.8,0.10000000000000009 L10.4,1.0 L11.3,1.6 L10.4,2.2 L9.8,3.1 L9.200000000000001,2.2 L8.3,1.6 L9.200000000000001,1.0 Z" fill="#fff"/><path d="M6.6,1.9000000000000004 L7.52,3.2800000000000002 L8.899999999999999,4.2 L7.52,5.12 L6.6,6.5 L5.68,5.12 L4.3,4.2 L5.68,3.2800000000000002 Z" fill="#fff"/><path d="M16.2,6.8999999999999995 L16.88,7.92 L17.9,8.6 L16.88,9.28 L16.2,10.299999999999999 L15.52,9.28 L14.5,8.6 L15.52,7.92 Z" fill="#fff"/></svg>
<div style="position:absolute;left:285.75px;top:291.75px;height:30px;line-height:30px;font-size:18px;color:#fff;font-weight:normal;white-space:nowrap;text-align:left;">提现</div>
<div style="position:absolute;left:336.5px;top:291.75px;width:33px;height:32px;border-radius:4px;background:#18bc9c"></div>
<svg style="position:absolute;left:344.5px;top:298.5px;" width="17" height="17" viewBox="0 0 17 17"><path d="M0.4,16.1 L0.4,12.2 L12.3,0.3 Q12.9,-0.3 13.5,0.3 L16.3,3.1 Q16.9,3.7 16.3,4.3 L4.3,16.1 Z" fill="#fff"/><path d="M10,2.6 L13.8,6.4 M2.7,11.8 L4.9,14.1" stroke="#18bc9c" stroke-width="1"/></svg>
<div style="position:absolute;left:375.5px;top:291.75px;width:31px;height:32px;border-radius:4px;background:#f75444"></div>
<svg style="position:absolute;left:383.0px;top:297.5px;" width="16" height="17" viewBox="0 0 16 17"><rect x="3.8" y="0.5" width="7.7" height="4" rx="1.6" fill="#fff"/><rect x="6.3" y="2.4" width="2.2" height="1.1" fill="#f75444"/><rect x="0.3" y="3.5" width="15.2" height="2.3" rx="1" fill="#fff"/><path d="M1.3,5.5 L14.2,5.5 L13.9,15.3 Q13.9,17 12.2,17 L3.3,17 Q1.6,17 1.6,15.3 Z" fill="#fff"/><rect x="4.5" y="7" width="1.3" height="7.7" fill="#f75444" opacity="0.6"/><rect x="7.2" y="7" width="1.3" height="7.7" fill="#f75444" opacity="0.6"/><rect x="9.9" y="7" width="1.3" height="7.7" fill="#f75444" opacity="0.6"/></svg>
<div style="position:absolute;left:23.5px;top:362.25px;width:110px;height:32px;border-radius:4px;background:#1688f0"></div>
<svg style="position:absolute;left:31.0px;top:367.25px;" width="19" height="18" viewBox="0 0 19 18"><path d="M2.4,15.6 L15.9,2.3" stroke="#fff" stroke-width="4.2"/><path d="M12,5.8 L14.6,3.3" stroke="#1688f0" stroke-width="1.1"/><path d="M3.4,0.10000000000000009 L4.0,1.0 L4.9,1.6 L4.0,2.2 L3.4,3.1 L2.8,2.2 L1.9,1.6 L2.8,1.0 Z" fill="#fff"/><path d="M9.8,0.10000000000000009 L10.4,1.0 L11.3,1.6 L10.4,2.2 L9.8,3.1 L9.200000000000001,2.2 L8.3,1.6 L9.200000000000001,1.0 Z" fill="#fff"/><path d="M6.6,1.9000000000000004 L7.52,3.2800000000000002 L8.899999999999999,4.2 L7.52,5.12 L6.6,6.5 L5.68,5.12 L4.3,4.2 L5.68,3.2800000000000002 Z" fill="#fff"/><path d="M16.2,6.8999999999999995 L16.88,7.92 L17.9,8.6 L16.88,9.28 L16.2,10.299999999999999 L15.52,9.28 L14.5,8.6 L15.52,7.92 Z" fill="#fff"/></svg>
<div style="position:absolute;left:52.75px;top:362.25px;height:30px;line-height:30px;font-size:18px;color:#fff;font-weight:normal;white-space:nowrap;text-align:left;">更新余额</div>
<div style="position:absolute;left:139.5px;top:362.25px;width:111px;height:32px;border-radius:4px;background:#f39c12"></div>
<svg style="position:absolute;left:147.0px;top:368.25px;" width="19" height="16" viewBox="0 0 19 16"><path d="M1.5,3 Q1.5,1.2 3.3,1.2 L7.3,1.2 Q8.5,1.2 8.9,2.3 L9.3,3.3 L16.2,3.3 Q18,3.3 18,5.1 L18,13.3 Q18,15.1 16.2,15.1 L3.3,15.1 Q1.5,15.1 1.5,13.3 Z" fill="none" stroke="#fff" stroke-width="2"/></svg>
<div style="position:absolute;left:169.5px;top:362.25px;height:30px;line-height:30px;font-size:18px;color:#fff;font-weight:normal;white-space:nowrap;text-align:left;">是否同步</div>
<div style="position:absolute;left:256.5px;top:362.25px;width:75px;height:32px;border-radius:4px;background:#1688f0"></div>
<svg style="position:absolute;left:264.0px;top:367.25px;" width="19" height="18" viewBox="0 0 19 18"><path d="M2.4,15.6 L15.9,2.3" stroke="#fff" stroke-width="4.2"/><path d="M12,5.8 L14.6,3.3" stroke="#1688f0" stroke-width="1.1"/><path d="M3.4,0.10000000000000009 L4.0,1.0 L4.9,1.6 L4.0,2.2 L3.4,3.1 L2.8,2.2 L1.9,1.6 L2.8,1.0 Z" fill="#fff"/><path d="M9.8,0.10000000000000009 L10.4,1.0 L11.3,1.6 L10.4,2.2 L9.8,3.1 L9.200000000000001,2.2 L8.3,1.6 L9.200000000000001,1.0 Z" fill="#fff"/><path d="M6.6,1.9000000000000004 L7.52,3.2800000000000002 L8.899999999999999,4.2 L7.52,5.12 L6.6,6.5 L5.68,5.12 L4.3,4.2 L5.68,3.2800000000000002 Z" fill="#fff"/><path d="M16.2,6.8999999999999995 L16.88,7.92 L17.9,8.6 L16.88,9.28 L16.2,10.299999999999999 L15.52,9.28 L14.5,8.6 L15.52,7.92 Z" fill="#fff"/></svg>
<div style="position:absolute;left:285.75px;top:362.25px;height:30px;line-height:30px;font-size:18px;color:#fff;font-weight:normal;white-space:nowrap;text-align:left;">提现</div>
<div style="position:absolute;left:336.5px;top:362.25px;width:33px;height:32px;border-radius:4px;background:#18bc9c"></div>
<svg style="position:absolute;left:344.5px;top:369.0px;" width="17" height="17" viewBox="0 0 17 17"><path d="M0.4,16.1 L0.4,12.2 L12.3,0.3 Q12.9,-0.3 13.5,0.3 L16.3,3.1 Q16.9,3.7 16.3,4.3 L4.3,16.1 Z" fill="#fff"/><path d="M10,2.6 L13.8,6.4 M2.7,11.8 L4.9,14.1" stroke="#18bc9c" stroke-width="1"/></svg>
<div style="position:absolute;left:375.5px;top:362.25px;width:31px;height:32px;border-radius:4px;background:#f75444"></div>
<svg style="position:absolute;left:383.0px;top:368.0px;" width="16" height="17" viewBox="0 0 16 17"><rect x="3.8" y="0.5" width="7.7" height="4" rx="1.6" fill="#fff"/><rect x="6.3" y="2.4" width="2.2" height="1.1" fill="#f75444"/><rect x="0.3" y="3.5" width="15.2" height="2.3" rx="1" fill="#fff"/><path d="M1.3,5.5 L14.2,5.5 L13.9,15.3 Q13.9,17 12.2,17 L3.3,17 Q1.6,17 1.6,15.3 Z" fill="#fff"/><rect x="4.5" y="7" width="1.3" height="7.7" fill="#f75444" opacity="0.6"/><rect x="7.2" y="7" width="1.3" height="7.7" fill="#f75444" opacity="0.6"/><rect x="9.9" y="7" width="1.3" height="7.7" fill="#f75444" opacity="0.6"/></svg>
<div style="position:absolute;left:23.5px;top:432.75px;width:110px;height:32px;border-radius:4px;background:#1688f0"></div>
<svg style="position:absolute;left:31.0px;top:437.75px;" width="19" height="18" viewBox="0 0 19 18"><path d="M2.4,15.6 L15.9,2.3" stroke="#fff" stroke-width="4.2"/><path d="M12,5.8 L14.6,3.3" stroke="#1688f0" stroke-width="1.1"/><path d="M3.4,0.10000000000000009 L4.0,1.0 L4.9,1.6 L4.0,2.2 L3.4,3.1 L2.8,2.2 L1.9,1.6 L2.8,1.0 Z" fill="#fff"/><path d="M9.8,0.10000000000000009 L10.4,1.0 L11.3,1.6 L10.4,2.2 L9.8,3.1 L9.200000000000001,2.2 L8.3,1.6 L9.200000000000001,1.0 Z" fill="#fff"/><path d="M6.6,1.9000000000000004 L7.52,3.2800000000000002 L8.899999999999999,4.2 L7.52,5.12 L6.6,6.5 L5.68,5.12 L4.3,4.2 L5.68,3.2800000000000002 Z" fill="#fff"/><path d="M16.2,6.8999999999999995 L16.88,7.92 L17.9,8.6 L16.88,9.28 L16.2,10.299999999999999 L15.52,9.28 L14.5,8.6 L15.52,7.92 Z" fill="#fff"/></svg>
<div style="position:absolute;left:52.75px;top:432.75px;height:30px;line-height:30px;font-size:18px;color:#fff;font-weight:normal;white-space:nowrap;text-align:left;">更新余额</div>
<div style="position:absolute;left:139.5px;top:432.75px;width:111px;height:32px;border-radius:4px;background:#f39c12"></div>
<svg style="position:absolute;left:147.0px;top:438.75px;" width="19" height="16" viewBox="0 0 19 16"><path d="M1.5,3 Q1.5,1.2 3.3,1.2 L7.3,1.2 Q8.5,1.2 8.9,2.3 L9.3,3.3 L16.2,3.3 Q18,3.3 18,5.1 L18,13.3 Q18,15.1 16.2,15.1 L3.3,15.1 Q1.5,15.1 1.5,13.3 Z" fill="none" stroke="#fff" stroke-width="2"/></svg>
<div style="position:absolute;left:169.5px;top:432.75px;height:30px;line-height:30px;font-size:18px;color:#fff;font-weight:normal;white-space:nowrap;text-align:left;">是否同步</div>
<div style="position:absolute;left:256.5px;top:432.75px;width:75px;height:32px;border-radius:4px;background:#1688f0"></div>
<svg style="position:absolute;left:264.0px;top:437.75px;" width="19" height="18" viewBox="0 0 19 18"><path d="M2.4,15.6 L15.9,2.3" stroke="#fff" stroke-width="4.2"/><path d="M12,5.8 L14.6,3.3" stroke="#1688f0" stroke-width="1.1"/><path d="M3.4,0.10000000000000009 L4.0,1.0 L4.9,1.6 L4.0,2.2 L3.4,3.1 L2.8,2.2 L1.9,1.6 L2.8,1.0 Z" fill="#fff"/><path d="M9.8,0.10000000000000009 L10.4,1.0 L11.3,1.6 L10.4,2.2 L9.8,3.1 L9.200000000000001,2.2 L8.3,1.6 L9.200000000000001,1.0 Z" fill="#fff"/><path d="M6.6,1.9000000000000004 L7.52,3.2800000000000002 L8.899999999999999,4.2 L7.52,5.12 L6.6,6.5 L5.68,5.12 L4.3,4.2 L5.68,3.2800000000000002 Z" fill="#fff"/><path d="M16.2,6.8999999999999995 L16.88,7.92 L17.9,8.6 L16.88,9.28 L16.2,10.299999999999999 L15.52,9.28 L14.5,8.6 L15.52,7.92 Z" fill="#fff"/></svg>
<div style="position:absolute;left:285.75px;top:432.75px;height:30px;line-height:30px;font-size:18px;color:#fff;font-weight:normal;white-space:nowrap;text-align:left;">提现</div>
<div style="position:absolute;left:336.5px;top:432.75px;width:33px;height:32px;border-radius:4px;background:#18bc9c"></div>
<svg style="position:absolute;left:344.5px;top:439.5px;" width="17" height="17" viewBox="0 0 17 17"><path d="M0.4,16.1 L0.4,12.2 L12.3,0.3 Q12.9,-0.3 13.5,0.3 L16.3,3.1 Q16.9,3.7 16.3,4.3 L4.3,16.1 Z" fill="#fff"/><path d="M10,2.6 L13.8,6.4 M2.7,11.8 L4.9,14.1" stroke="#18bc9c" stroke-width="1"/></svg>
<div style="position:absolute;left:375.5px;top:432.75px;width:31px;height:32px;border-radius:4px;background:#f75444"></div>
<svg style="position:absolute;left:383.0px;top:438.5px;" width="16" height="17" viewBox="0 0 16 17"><rect x="3.8" y="0.5" width="7.7" height="4" rx="1.6" fill="#fff"/><rect x="6.3" y="2.4" width="2.2" height="1.1" fill="#f75444"/><rect x="0.3" y="3.5" width="15.2" height="2.3" rx="1" fill="#fff"/><path d="M1.3,5.5 L14.2,5.5 L13.9,15.3 Q13.9,17 12.2,17 L3.3,17 Q1.6,17 1.6,15.3 Z" fill="#fff"/><rect x="4.5" y="7" width="1.3" height="7.7" fill="#f75444" opacity="0.6"/><rect x="7.2" y="7" width="1.3" height="7.7" fill="#f75444" opacity="0.6"/><rect x="9.9" y="7" width="1.3" height="7.7" fill="#f75444" opacity="0.6"/></svg>
<div style="position:absolute;left:23.5px;top:503.25px;width:110px;height:32px;border-radius:4px;background:#1688f0"></div>
<svg style="position:absolute;left:31.0px;top:508.25px;" width="19" height="18" viewBox="0 0 19 18"><path d="M2.4,15.6 L15.9,2.3" stroke="#fff" stroke-width="4.2"/><path d="M12,5.8 L14.6,3.3" stroke="#1688f0" stroke-width="1.1"/><path d="M3.4,0.10000000000000009 L4.0,1.0 L4.9,1.6 L4.0,2.2 L3.4,3.1 L2.8,2.2 L1.9,1.6 L2.8,1.0 Z" fill="#fff"/><path d="M9.8,0.10000000000000009 L10.4,1.0 L11.3,1.6 L10.4,2.2 L9.8,3.1 L9.200000000000001,2.2 L8.3,1.6 L9.200000000000001,1.0 Z" fill="#fff"/><path d="M6.6,1.9000000000000004 L7.52,3.2800000000000002 L8.899999999999999,4.2 L7.52,5.12 L6.6,6.5 L5.68,5.12 L4.3,4.2 L5.68,3.2800000000000002 Z" fill="#fff"/><path d="M16.2,6.8999999999999995 L16.88,7.92 L17.9,8.6 L16.88,9.28 L16.2,10.299999999999999 L15.52,9.28 L14.5,8.6 L15.52,7.92 Z" fill="#fff"/></svg>
<div style="position:absolute;left:52.75px;top:503.25px;height:30px;line-height:30px;font-size:18px;color:#fff;font-weight:normal;white-space:nowrap;text-align:left;">更新余额</div>
<div style="position:absolute;left:139.5px;top:503.25px;width:111px;height:32px;border-radius:4px;background:#f39c12"></div>
<svg style="position:absolute;left:147.0px;top:509.25px;" width="19" height="16" viewBox="0 0 19 16"><path d="M1.5,3 Q1.5,1.2 3.3,1.2 L7.3,1.2 Q8.5,1.2 8.9,2.3 L9.3,3.3 L16.2,3.3 Q18,3.3 18,5.1 L18,13.3 Q18,15.1 16.2,15.1 L3.3,15.1 Q1.5,15.1 1.5,13.3 Z" fill="none" stroke="#fff" stroke-width="2"/></svg>
<div style="position:absolute;left:169.5px;top:503.25px;height:30px;line-height:30px;font-size:18px;color:#fff;font-weight:normal;white-space:nowrap;text-align:left;">是否同步</div>
<div style="position:absolute;left:256.5px;top:503.25px;width:75px;height:32px;border-radius:4px;background:#1688f0"></div>
<svg style="position:absolute;left:264.0px;top:508.25px;" width="19" height="18" viewBox="0 0 19 18"><path d="M2.4,15.6 L15.9,2.3" stroke="#fff" stroke-width="4.2"/><path d="M12,5.8 L14.6,3.3" stroke="#1688f0" stroke-width="1.1"/><path d="M3.4,0.10000000000000009 L4.0,1.0 L4.9,1.6 L4.0,2.2 L3.4,3.1 L2.8,2.2 L1.9,1.6 L2.8,1.0 Z" fill="#fff"/><path d="M9.8,0.10000000000000009 L10.4,1.0 L11.3,1.6 L10.4,2.2 L9.8,3.1 L9.200000000000001,2.2 L8.3,1.6 L9.200000000000001,1.0 Z" fill="#fff"/><path d="M6.6,1.9000000000000004 L7.52,3.2800000000000002 L8.899999999999999,4.2 L7.52,5.12 L6.6,6.5 L5.68,5.12 L4.3,4.2 L5.68,3.2800000000000002 Z" fill="#fff"/><path d="M16.2,6.8999999999999995 L16.88,7.92 L17.9,8.6 L16.88,9.28 L16.2,10.299999999999999 L15.52,9.28 L14.5,8.6 L15.52,7.92 Z" fill="#fff"/></svg>
<div style="position:absolute;left:285.75px;top:503.25px;height:30px;line-height:30px;font-size:18px;color:#fff;font-weight:normal;white-space:nowrap;text-align:left;">提现</div>
<div style="position:absolute;left:336.5px;top:503.25px;width:33px;height:32px;border-radius:4px;background:#18bc9c"></div>
<svg style="position:absolute;left:344.5px;top:510.0px;" width="17" height="17" viewBox="0 0 17 17"><path d="M0.4,16.1 L0.4,12.2 L12.3,0.3 Q12.9,-0.3 13.5,0.3 L16.3,3.1 Q16.9,3.7 16.3,4.3 L4.3,16.1 Z" fill="#fff"/><path d="M10,2.6 L13.8,6.4 M2.7,11.8 L4.9,14.1" stroke="#18bc9c" stroke-width="1"/></svg>
<div style="position:absolute;left:375.5px;top:503.25px;width:31px;height:32px;border-radius:4px;background:#f75444"></div>
<svg style="position:absolute;left:383.0px;top:509.0px;" width="16" height="17" viewBox="0 0 16 17"><rect x="3.8" y="0.5" width="7.7" height="4" rx="1.6" fill="#fff"/><rect x="6.3" y="2.4" width="2.2" height="1.1" fill="#f75444"/><rect x="0.3" y="3.5" width="15.2" height="2.3" rx="1" fill="#fff"/><path d="M1.3,5.5 L14.2,5.5 L13.9,15.3 Q13.9,17 12.2,17 L3.3,17 Q1.6,17 1.6,15.3 Z" fill="#fff"/><rect x="4.5" y="7" width="1.3" height="7.7" fill="#f75444" opacity="0.6"/><rect x="7.2" y="7" width="1.3" height="7.7" fill="#f75444" opacity="0.6"/><rect x="9.9" y="7" width="1.3" height="7.7" fill="#f75444" opacity="0.6"/></svg>
<div style="position:absolute;left:23.5px;top:573.75px;width:110px;height:32px;border-radius:4px;background:#1688f0"></div>
<svg style="position:absolute;left:31.0px;top:578.75px;" width="19" height="18" viewBox="0 0 19 18"><path d="M2.4,15.6 L15.9,2.3" stroke="#fff" stroke-width="4.2"/><path d="M12,5.8 L14.6,3.3" stroke="#1688f0" stroke-width="1.1"/><path d="M3.4,0.10000000000000009 L4.0,1.0 L4.9,1.6 L4.0,2.2 L3.4,3.1 L2.8,2.2 L1.9,1.6 L2.8,1.0 Z" fill="#fff"/><path d="M9.8,0.10000000000000009 L10.4,1.0 L11.3,1.6 L10.4,2.2 L9.8,3.1 L9.200000000000001,2.2 L8.3,1.6 L9.200000000000001,1.0 Z" fill="#fff"/><path d="M6.6,1.9000000000000004 L7.52,3.2800000000000002 L8.899999999999999,4.2 L7.52,5.12 L6.6,6.5 L5.68,5.12 L4.3,4.2 L5.68,3.2800000000000002 Z" fill="#fff"/><path d="M16.2,6.8999999999999995 L16.88,7.92 L17.9,8.6 L16.88,9.28 L16.2,10.299999999999999 L15.52,9.28 L14.5,8.6 L15.52,7.92 Z" fill="#fff"/></svg>
<div style="position:absolute;left:52.75px;top:573.75px;height:30px;line-height:30px;font-size:18px;color:#fff;font-weight:normal;white-space:nowrap;text-align:left;">更新余额</div>
<div style="position:absolute;left:139.5px;top:573.75px;width:111px;height:32px;border-radius:4px;background:#f39c12"></div>
<svg style="position:absolute;left:147.0px;top:579.75px;" width="19" height="16" viewBox="0 0 19 16"><path d="M1.5,3 Q1.5,1.2 3.3,1.2 L7.3,1.2 Q8.5,1.2 8.9,2.3 L9.3,3.3 L16.2,3.3 Q18,3.3 18,5.1 L18,13.3 Q18,15.1 16.2,15.1 L3.3,15.1 Q1.5,15.1 1.5,13.3 Z" fill="none" stroke="#fff" stroke-width="2"/></svg>
<div style="position:absolute;left:169.5px;top:573.75px;height:30px;line-height:30px;font-size:18px;color:#fff;font-weight:normal;white-space:nowrap;text-align:left;">是否同步</div>
<div style="position:absolute;left:256.5px;top:573.75px;width:75px;height:32px;border-radius:4px;background:#1688f0"></div>
<svg style="position:absolute;left:264.0px;top:578.75px;" width="19" height="18" viewBox="0 0 19 18"><path d="M2.4,15.6 L15.9,2.3" stroke="#fff" stroke-width="4.2"/><path d="M12,5.8 L14.6,3.3" stroke="#1688f0" stroke-width="1.1"/><path d="M3.4,0.10000000000000009 L4.0,1.0 L4.9,1.6 L4.0,2.2 L3.4,3.1 L2.8,2.2 L1.9,1.6 L2.8,1.0 Z" fill="#fff"/><path d="M9.8,0.10000000000000009 L10.4,1.0 L11.3,1.6 L10.4,2.2 L9.8,3.1 L9.200000000000001,2.2 L8.3,1.6 L9.200000000000001,1.0 Z" fill="#fff"/><path d="M6.6,1.9000000000000004 L7.52,3.2800000000000002 L8.899999999999999,4.2 L7.52,5.12 L6.6,6.5 L5.68,5.12 L4.3,4.2 L5.68,3.2800000000000002 Z" fill="#fff"/><path d="M16.2,6.8999999999999995 L16.88,7.92 L17.9,8.6 L16.88,9.28 L16.2,10.299999999999999 L15.52,9.28 L14.5,8.6 L15.52,7.92 Z" fill="#fff"/></svg>
<div style="position:absolute;left:285.75px;top:573.75px;height:30px;line-height:30px;font-size:18px;color:#fff;font-weight:normal;white-space:nowrap;text-align:left;">提现</div>
<div style="position:absolute;left:336.5px;top:573.75px;width:33px;height:32px;border-radius:4px;background:#18bc9c"></div>
<svg style="position:absolute;left:344.5px;top:580.5px;" width="17" height="17" viewBox="0 0 17 17"><path d="M0.4,16.1 L0.4,12.2 L12.3,0.3 Q12.9,-0.3 13.5,0.3 L16.3,3.1 Q16.9,3.7 16.3,4.3 L4.3,16.1 Z" fill="#fff"/><path d="M10,2.6 L13.8,6.4 M2.7,11.8 L4.9,14.1" stroke="#18bc9c" stroke-width="1"/></svg>
<div style="position:absolute;left:375.5px;top:573.75px;width:31px;height:32px;border-radius:4px;background:#f75444"></div>
<svg style="position:absolute;left:383.0px;top:579.5px;" width="16" height="17" viewBox="0 0 16 17"><rect x="3.8" y="0.5" width="7.7" height="4" rx="1.6" fill="#fff"/><rect x="6.3" y="2.4" width="2.2" height="1.1" fill="#f75444"/><rect x="0.3" y="3.5" width="15.2" height="2.3" rx="1" fill="#fff"/><path d="M1.3,5.5 L14.2,5.5 L13.9,15.3 Q13.9,17 12.2,17 L3.3,17 Q1.6,17 1.6,15.3 Z" fill="#fff"/><rect x="4.5" y="7" width="1.3" height="7.7" fill="#f75444" opacity="0.6"/><rect x="7.2" y="7" width="1.3" height="7.7" fill="#f75444" opacity="0.6"/><rect x="9.9" y="7" width="1.3" height="7.7" fill="#f75444" opacity="0.6"/></svg>
<div style="position:absolute;left:23.5px;top:644.25px;width:110px;height:32px;border-radius:4px;background:#1688f0"></div>
<svg style="position:absolute;left:31.0px;top:649.25px;" width="19" height="18" viewBox="0 0 19 18"><path d="M2.4,15.6 L15.9,2.3" stroke="#fff" stroke-width="4.2"/><path d="M12,5.8 L14.6,3.3" stroke="#1688f0" stroke-width="1.1"/><path d="M3.4,0.10000000000000009 L4.0,1.0 L4.9,1.6 L4.0,2.2 L3.4,3.1 L2.8,2.2 L1.9,1.6 L2.8,1.0 Z" fill="#fff"/><path d="M9.8,0.10000000000000009 L10.4,1.0 L11.3,1.6 L10.4,2.2 L9.8,3.1 L9.200000000000001,2.2 L8.3,1.6 L9.200000000000001,1.0 Z" fill="#fff"/><path d="M6.6,1.9000000000000004 L7.52,3.2800000000000002 L8.899999999999999,4.2 L7.52,5.12 L6.6,6.5 L5.68,5.12 L4.3,4.2 L5.68,3.2800000000000002 Z" fill="#fff"/><path d="M16.2,6.8999999999999995 L16.88,7.92 L17.9,8.6 L16.88,9.28 L16.2,10.299999999999999 L15.52,9.28 L14.5,8.6 L15.52,7.92 Z" fill="#fff"/></svg>
<div style="position:absolute;left:52.75px;top:644.25px;height:30px;line-height:30px;font-size:18px;color:#fff;font-weight:normal;white-space:nowrap;text-align:left;">更新余额</div>
<div style="position:absolute;left:139.5px;top:644.25px;width:111px;height:32px;border-radius:4px;background:#f39c12"></div>
<svg style="position:absolute;left:147.0px;top:650.25px;" width="19" height="16" viewBox="0 0 19 16"><path d="M1.5,3 Q1.5,1.2 3.3,1.2 L7.3,1.2 Q8.5,1.2 8.9,2.3 L9.3,3.3 L16.2,3.3 Q18,3.3 18,5.1 L18,13.3 Q18,15.1 16.2,15.1 L3.3,15.1 Q1.5,15.1 1.5,13.3 Z" fill="none" stroke="#fff" stroke-width="2"/></svg>
<div style="position:absolute;left:169.5px;top:644.25px;height:30px;line-height:30px;font-size:18px;color:#fff;font-weight:normal;white-space:nowrap;text-align:left;">是否同步</div>
<div style="position:absolute;left:256.5px;top:644.25px;width:75px;height:32px;border-radius:4px;background:#1688f0"></div>
<svg style="position:absolute;left:264.0px;top:649.25px;" width="19" height="18" viewBox="0 0 19 18"><path d="M2.4,15.6 L15.9,2.3" stroke="#fff" stroke-width="4.2"/><path d="M12,5.8 L14.6,3.3" stroke="#1688f0" stroke-width="1.1"/><path d="M3.4,0.10000000000000009 L4.0,1.0 L4.9,1.6 L4.0,2.2 L3.4,3.1 L2.8,2.2 L1.9,1.6 L2.8,1.0 Z" fill="#fff"/><path d="M9.8,0.10000000000000009 L10.4,1.0 L11.3,1.6 L10.4,2.2 L9.8,3.1 L9.200000000000001,2.2 L8.3,1.6 L9.200000000000001,1.0 Z" fill="#fff"/><path d="M6.6,1.9000000000000004 L7.52,3.2800000000000002 L8.899999999999999,4.2 L7.52,5.12 L6.6,6.5 L5.68,5.12 L4.3,4.2 L5.68,3.2800000000000002 Z" fill="#fff"/><path d="M16.2,6.8999999999999995 L16.88,7.92 L17.9,8.6 L16.88,9.28 L16.2,10.299999999999999 L15.52,9.28 L14.5,8.6 L15.52,7.92 Z" fill="#fff"/></svg>
<div style="position:absolute;left:285.75px;top:644.25px;height:30px;line-height:30px;font-size:18px;color:#fff;font-weight:normal;white-space:nowrap;text-align:left;">提现</div>
<div style="position:absolute;left:336.5px;top:644.25px;width:33px;height:32px;border-radius:4px;background:#18bc9c"></div>
<svg style="position:absolute;left:344.5px;top:651.0px;" width="17" height="17" viewBox="0 0 17 17"><path d="M0.4,16.1 L0.4,12.2 L12.3,0.3 Q12.9,-0.3 13.5,0.3 L16.3,3.1 Q16.9,3.7 16.3,4.3 L4.3,16.1 Z" fill="#fff"/><path d="M10,2.6 L13.8,6.4 M2.7,11.8 L4.9,14.1" stroke="#18bc9c" stroke-width="1"/></svg>
<div style="position:absolute;left:375.5px;top:644.25px;width:31px;height:32px;border-radius:4px;background:#f75444"></div>
<svg style="position:absolute;left:383.0px;top:650.0px;" width="16" height="17" viewBox="0 0 16 17"><rect x="3.8" y="0.5" width="7.7" height="4" rx="1.6" fill="#fff"/><rect x="6.3" y="2.4" width="2.2" height="1.1" fill="#f75444"/><rect x="0.3" y="3.5" width="15.2" height="2.3" rx="1" fill="#fff"/><path d="M1.3,5.5 L14.2,5.5 L13.9,15.3 Q13.9,17 12.2,17 L3.3,17 Q1.6,17 1.6,15.3 Z" fill="#fff"/><rect x="4.5" y="7" width="1.3" height="7.7" fill="#f75444" opacity="0.6"/><rect x="7.2" y="7" width="1.3" height="7.7" fill="#f75444" opacity="0.6"/><rect x="9.9" y="7" width="1.3" height="7.7" fill="#f75444" opacity="0.6"/></svg>
<div style="position:absolute;left:23.5px;top:714.75px;width:110px;height:32px;border-radius:4px;background:#1688f0"></div>
<svg style="position:absolute;left:31.0px;top:719.75px;" width="19" height="18" viewBox="0 0 19 18"><path d="M2.4,15.6 L15.9,2.3" stroke="#fff" stroke-width="4.2"/><path d="M12,5.8 L14.6,3.3" stroke="#1688f0" stroke-width="1.1"/><path d="M3.4,0.10000000000000009 L4.0,1.0 L4.9,1.6 L4.0,2.2 L3.4,3.1 L2.8,2.2 L1.9,1.6 L2.8,1.0 Z" fill="#fff"/><path d="M9.8,0.10000000000000009 L10.4,1.0 L11.3,1.6 L10.4,2.2 L9.8,3.1 L9.200000000000001,2.2 L8.3,1.6 L9.200000000000001,1.0 Z" fill="#fff"/><path d="M6.6,1.9000000000000004 L7.52,3.2800000000000002 L8.899999999999999,4.2 L7.52,5.12 L6.6,6.5 L5.68,5.12 L4.3,4.2 L5.68,3.2800000000000002 Z" fill="#fff"/><path d="M16.2,6.8999999999999995 L16.88,7.92 L17.9,8.6 L16.88,9.28 L16.2,10.299999999999999 L15.52,9.28 L14.5,8.6 L15.52,7.92 Z" fill="#fff"/></svg>
<div style="position:absolute;left:52.75px;top:714.75px;height:30px;line-height:30px;font-size:18px;color:#fff;font-weight:normal;white-space:nowrap;text-align:left;">更新余额</div>
<div style="position:absolute;left:139.5px;top:714.75px;width:111px;height:32px;border-radius:4px;background:#f39c12"></div>
<svg style="position:absolute;left:147.0px;top:720.75px;" width="19" height="16" viewBox="0 0 19 16"><path d="M1.5,3 Q1.5,1.2 3.3,1.2 L7.3,1.2 Q8.5,1.2 8.9,2.3 L9.3,3.3 L16.2,3.3 Q18,3.3 18,5.1 L18,13.3 Q18,15.1 16.2,15.1 L3.3,15.1 Q1.5,15.1 1.5,13.3 Z" fill="none" stroke="#fff" stroke-width="2"/></svg>
<div style="position:absolute;left:169.5px;top:714.75px;height:30px;line-height:30px;font-size:18px;color:#fff;font-weight:normal;white-space:nowrap;text-align:left;">是否同步</div>
<div style="position:absolute;left:256.5px;top:714.75px;width:75px;height:32px;border-radius:4px;background:#1688f0"></div>
<svg style="position:absolute;left:264.0px;top:719.75px;" width="19" height="18" viewBox="0 0 19 18"><path d="M2.4,15.6 L15.9,2.3" stroke="#fff" stroke-width="4.2"/><path d="M12,5.8 L14.6,3.3" stroke="#1688f0" stroke-width="1.1"/><path d="M3.4,0.10000000000000009 L4.0,1.0 L4.9,1.6 L4.0,2.2 L3.4,3.1 L2.8,2.2 L1.9,1.6 L2.8,1.0 Z" fill="#fff"/><path d="M9.8,0.10000000000000009 L10.4,1.0 L11.3,1.6 L10.4,2.2 L9.8,3.1 L9.200000000000001,2.2 L8.3,1.6 L9.200000000000001,1.0 Z" fill="#fff"/><path d="M6.6,1.9000000000000004 L7.52,3.2800000000000002 L8.899999999999999,4.2 L7.52,5.12 L6.6,6.5 L5.68,5.12 L4.3,4.2 L5.68,3.2800000000000002 Z" fill="#fff"/><path d="M16.2,6.8999999999999995 L16.88,7.92 L17.9,8.6 L16.88,9.28 L16.2,10.299999999999999 L15.52,9.28 L14.5,8.6 L15.52,7.92 Z" fill="#fff"/></svg>
<div style="position:absolute;left:285.75px;top:714.75px;height:30px;line-height:30px;font-size:18px;color:#fff;font-weight:normal;white-space:nowrap;text-align:left;">提现</div>
<div style="position:absolute;left:336.5px;top:714.75px;width:33px;height:32px;border-radius:4px;background:#18bc9c"></div>
<svg style="position:absolute;left:344.5px;top:721.5px;" width="17" height="17" viewBox="0 0 17 17"><path d="M0.4,16.1 L0.4,12.2 L12.3,0.3 Q12.9,-0.3 13.5,0.3 L16.3,3.1 Q16.9,3.7 16.3,4.3 L4.3,16.1 Z" fill="#fff"/><path d="M10,2.6 L13.8,6.4 M2.7,11.8 L4.9,14.1" stroke="#18bc9c" stroke-width="1"/></svg>
<div style="position:absolute;left:375.5px;top:714.75px;width:31px;height:32px;border-radius:4px;background:#f75444"></div>
<svg style="position:absolute;left:383.0px;top:720.5px;" width="16" height="17" viewBox="0 0 16 17"><rect x="3.8" y="0.5" width="7.7" height="4" rx="1.6" fill="#fff"/><rect x="6.3" y="2.4" width="2.2" height="1.1" fill="#f75444"/><rect x="0.3" y="3.5" width="15.2" height="2.3" rx="1" fill="#fff"/><path d="M1.3,5.5 L14.2,5.5 L13.9,15.3 Q13.9,17 12.2,17 L3.3,17 Q1.6,17 1.6,15.3 Z" fill="#fff"/><rect x="4.5" y="7" width="1.3" height="7.7" fill="#f75444" opacity="0.6"/><rect x="7.2" y="7" width="1.3" height="7.7" fill="#f75444" opacity="0.6"/><rect x="9.9" y="7" width="1.3" height="7.7" fill="#f75444" opacity="0.6"/></svg>
</div>
<div style="position:absolute;left:390px;top:1183.5px;width:2102px;height:16px;background:#fafafa;"></div>
<svg style="position:absolute;left:397px;top:1187.5px;" width="8" height="16" viewBox="0 0 8 16"><path d="M8,0 L8,16 L0,8 Z" fill="#8a8a8a"/></svg>
<div style="position:absolute;left:417px;top:1188.8px;width:1530px;height:13px;background:#8a8a8a;border-radius:6.5px;"></div>
<svg style="position:absolute;left:2478px;top:1187.8px;" width="8" height="16" viewBox="0 0 8 16"><path d="M0,0 L8,8 L0,16 Z" fill="#8a8a8a"/></svg>
<div style="position:absolute;left:2538px;top:76px;width:22px;height:1123px;background:#fafafa;"></div>
<svg style="position:absolute;left:2542px;top:84px;" width="15" height="8" viewBox="0 0 15 8"><path d="M7.5,0 L15,8 L0,8 Z" fill="#8a8a8a"/></svg>
<div style="position:absolute;left:2543px;top:103px;width:13px;height:957px;background:#8b8b8b;border-radius:6.5px;"></div>
<svg style="position:absolute;left:2542px;top:1184px;" width="15" height="8" viewBox="0 0 15 8"><path d="M0,0 L15,0 L7.5,8 Z" fill="#8a8a8a"/></svg>
</body></html>
